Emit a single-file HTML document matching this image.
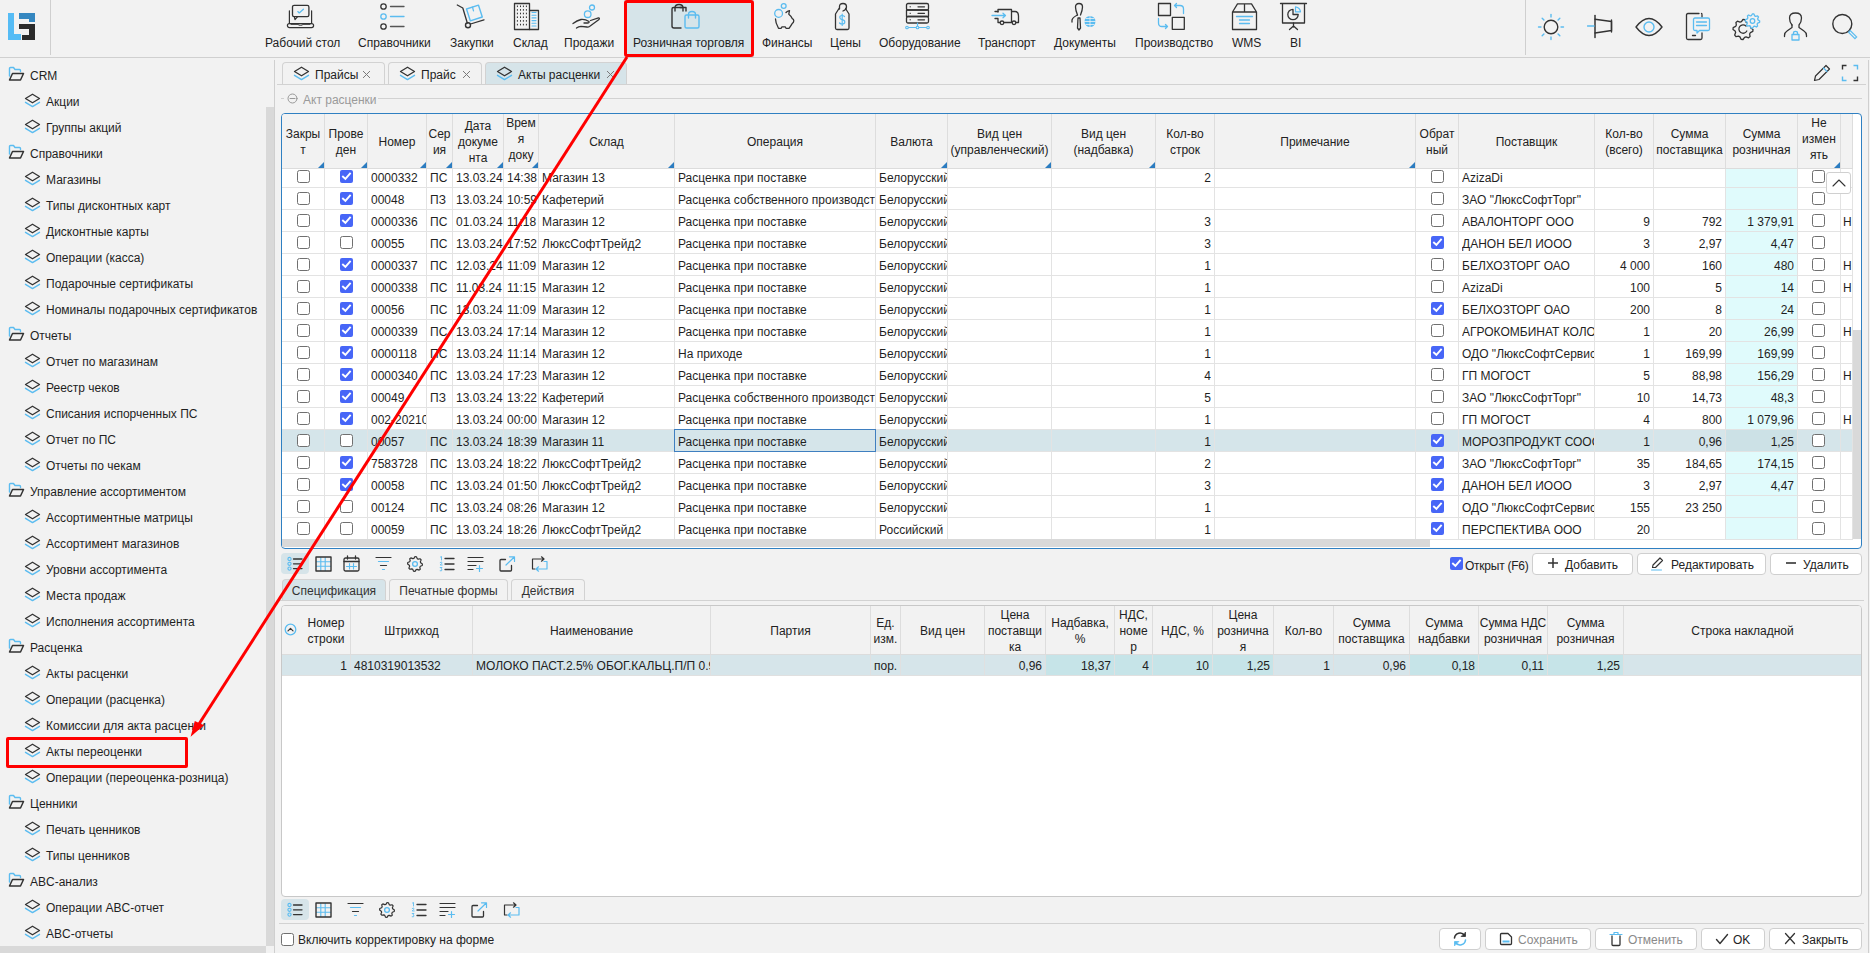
<!DOCTYPE html><html><head><meta charset="utf-8"><style>
*{box-sizing:border-box}
html,body{margin:0;padding:0}
body{width:1870px;height:953px;overflow:hidden;background:#f2f2f2;font-family:"Liberation Sans",sans-serif;font-size:12px;color:#1f1f1f}
#r{position:relative;width:1870px;height:953px;overflow:hidden;background:#f2f2f2}
.a{position:absolute}
.t{position:absolute;white-space:nowrap;line-height:14px}
.clip{position:absolute;overflow:hidden;white-space:nowrap;line-height:14px}
</style></head><body><div id="r">
<div class="a" style="left:8px;top:13px;width:6px;height:27px;background:#56bcf5"></div>
<div class="a" style="left:8px;top:34px;width:13px;height:6px;background:#56bcf5"></div>
<div class="a" style="left:19px;top:13px;width:16px;height:6px;background:#3587c0"></div>
<div class="a" style="left:29px;top:13px;width:6px;height:9px;background:#3587c0"></div>
<div class="a" style="left:19px;top:24px;width:16px;height:5px;background:#2b2b2b"></div>
<div class="a" style="left:29px;top:24px;width:6px;height:16px;background:#2b2b2b"></div>
<div class="a" style="left:22px;top:35px;width:13px;height:5px;background:#2b2b2b"></div>
<div class="a" style="left:50px;top:0px;width:1px;height:55px;background:#cfcfcf"></div>
<div class="a" style="left:0px;top:57px;width:1870px;height:1px;background:#d0d0d0"></div>
<div class="a" style="left:624px;top:-3px;width:130px;height:60px;background:#d6e4e9"></div>
<div class="t" style="left:265px;top:36px;color:#222">Рабочий стол</div>
<div class="t" style="left:358px;top:36px;color:#222">Справочники</div>
<div class="t" style="left:450px;top:36px;color:#222">Закупки</div>
<div class="t" style="left:513px;top:36px;color:#222">Склад</div>
<div class="t" style="left:564px;top:36px;color:#222">Продажи</div>
<div class="t" style="left:633px;top:36px;color:#222">Розничная торговля</div>
<div class="t" style="left:762px;top:36px;color:#222">Финансы</div>
<div class="t" style="left:830px;top:36px;color:#222">Цены</div>
<div class="t" style="left:879px;top:36px;color:#222">Оборудование</div>
<div class="t" style="left:978px;top:36px;color:#222">Транспорт</div>
<div class="t" style="left:1054px;top:36px;color:#222">Документы</div>
<div class="t" style="left:1135px;top:36px;color:#222">Производство</div>
<div class="t" style="left:1232px;top:36px;color:#222">WMS</div>
<div class="t" style="left:1290px;top:36px;color:#222">BI</div>
<svg class="a" style="left:286px;top:4px;" width="30" height="26" viewBox="0 0 30 26" fill="none" stroke-linecap="round" stroke-linejoin="round">
      <rect x="6.5" y="1.3" width="16.4" height="11.4" rx="1.6" stroke="#333" stroke-width="1.3"/>
      <path d="M8.3 12.7 L9 15.6 L11.6 12.7" stroke="#333" stroke-width="1.2"/>
      <path d="M11.8 7.6 L13.2 8.9 L17.4 5.2" stroke="#5bbcf0" stroke-width="1.3"/>
      <path d="M3.4 6.8 V19.5 M25.6 6.8 V19.5" stroke="#333" stroke-width="1.2"/>
      <rect x="1.4" y="19.6" width="26.2" height="4" rx="2" stroke="#333" stroke-width="1.2"/>
      <path d="M5 20.3 H12 Q12.5 21.3 14.5 21.3 Q16.5 21.3 17 20.3 H24" stroke="#333" stroke-width="1"/>
    </svg>
<svg class="a" style="left:379px;top:2px;" width="28" height="29" viewBox="0 0 28 29" fill="none" stroke-linecap="round" stroke-linejoin="round">
      <circle cx="4.5" cy="4.5" r="2.7" stroke="#333" stroke-width="1.3"/>
      <circle cx="4.5" cy="14.5" r="2.7" stroke="#5bbcf0" stroke-width="1.3"/>
      <circle cx="4.5" cy="24.5" r="2.7" stroke="#333" stroke-width="1.3"/>
      <path d="M11.5 4.5 H25" stroke="#555" stroke-width="1.3"/>
      <path d="M11.5 14.5 H25" stroke="#5bbcf0" stroke-width="1.3"/>
      <path d="M11.5 24.5 H25" stroke="#555" stroke-width="1.3"/>
    </svg>
<svg class="a" style="left:455px;top:3px;" width="30" height="27" viewBox="0 0 30 27" fill="none" stroke-linecap="round" stroke-linejoin="round">
      <path d="M2.3 2 L7.8 5 L12.3 20" stroke="#333" stroke-width="1.3"/>
      <circle cx="13" cy="22.2" r="2.5" stroke="#333" stroke-width="1.4"/>
      <path d="M15.5 21 L29 16.8" stroke="#333" stroke-width="1.3"/>
      <path d="M11.5 6 L23.5 2.2 L27.3 14 L15.3 17.8 Z" stroke="#5bbcf0" stroke-width="1.4"/>
      <path d="M17.5 4.2 L18.5 7.8" stroke="#5bbcf0" stroke-width="1.3"/>
    </svg>
<svg class="a" style="left:513px;top:2px;" width="28" height="29" viewBox="0 0 28 29" fill="none" stroke-linecap="round" stroke-linejoin="round">
      <rect x="1.5" y="1.5" width="15" height="26" stroke="#333" stroke-width="1.3"/>
      <path d="M16.5 8.5 H25.5 V27.5 H16.5" stroke="#333" stroke-width="1.3"/>
      <path d="M19 10.5 H23" stroke="#5bbcf0" stroke-width="1.1"/><path d="M19 13.2 H23" stroke="#5bbcf0" stroke-width="1.1"/><path d="M19 15.9 H23" stroke="#5bbcf0" stroke-width="1.1"/><path d="M19 18.6 H23" stroke="#5bbcf0" stroke-width="1.1"/><path d="M19 21.3 H23" stroke="#5bbcf0" stroke-width="1.1"/><path d="M19 24.0 H23" stroke="#5bbcf0" stroke-width="1.1"/><path d="M4.4 3.5 V5.1" stroke="#333" stroke-width="1" stroke-linecap="butt"/><path d="M4.4 7.1 V8.7" stroke="#333" stroke-width="1" stroke-linecap="butt"/><path d="M4.4 10.7 V12.3" stroke="#333" stroke-width="1" stroke-linecap="butt"/><path d="M4.4 14.4 V16.0" stroke="#333" stroke-width="1" stroke-linecap="butt"/><path d="M4.4 18.1 V19.7" stroke="#333" stroke-width="1" stroke-linecap="butt"/><path d="M4.4 21.8 V23.4" stroke="#333" stroke-width="1" stroke-linecap="butt"/><path d="M7.5 3.5 V5.1" stroke="#333" stroke-width="1" stroke-linecap="butt"/><path d="M7.5 7.1 V8.7" stroke="#333" stroke-width="1" stroke-linecap="butt"/><path d="M7.5 10.7 V12.3" stroke="#333" stroke-width="1" stroke-linecap="butt"/><path d="M7.5 14.4 V16.0" stroke="#333" stroke-width="1" stroke-linecap="butt"/><path d="M7.5 18.1 V19.7" stroke="#333" stroke-width="1" stroke-linecap="butt"/><path d="M7.5 21.8 V23.4" stroke="#333" stroke-width="1" stroke-linecap="butt"/><path d="M10.4 3.5 V5.1" stroke="#333" stroke-width="1" stroke-linecap="butt"/><path d="M10.4 7.1 V8.7" stroke="#333" stroke-width="1" stroke-linecap="butt"/><path d="M10.4 10.7 V12.3" stroke="#333" stroke-width="1" stroke-linecap="butt"/><path d="M10.4 14.4 V16.0" stroke="#333" stroke-width="1" stroke-linecap="butt"/><path d="M10.4 18.1 V19.7" stroke="#333" stroke-width="1" stroke-linecap="butt"/><path d="M10.4 21.8 V23.4" stroke="#333" stroke-width="1" stroke-linecap="butt"/><path d="M13.4 3.5 V5.1" stroke="#333" stroke-width="1" stroke-linecap="butt"/><path d="M13.4 7.1 V8.7" stroke="#333" stroke-width="1" stroke-linecap="butt"/><path d="M13.4 10.7 V12.3" stroke="#333" stroke-width="1" stroke-linecap="butt"/><path d="M13.4 14.4 V16.0" stroke="#333" stroke-width="1" stroke-linecap="butt"/><path d="M13.4 18.1 V19.7" stroke="#333" stroke-width="1" stroke-linecap="butt"/><path d="M13.4 21.8 V23.4" stroke="#333" stroke-width="1" stroke-linecap="butt"/>
    </svg>
<svg class="a" style="left:572px;top:3px;" width="30" height="27" viewBox="0 0 30 27" fill="none" stroke-linecap="round" stroke-linejoin="round">
      <circle cx="15.7" cy="11.2" r="3.3" stroke="#5bbcf0" stroke-width="1.3"/>
      <circle cx="20" cy="4.5" r="2.5" stroke="#5bbcf0" stroke-width="1.3"/>
      <path d="M1 20.5 Q5 17.5 9 16.5 Q13 16 17 18.5 Q17.5 20 15.5 20 H12" stroke="#333" stroke-width="1.3"/>
      <path d="M18.5 17.5 L26.5 14.8 Q28 15 27 16.5 L17.5 23.5 Q16.5 24.2 15 24 L9 23.3 Q6.5 23.5 4.5 25" stroke="#333" stroke-width="1.3"/>
    </svg>
<svg class="a" style="left:670px;top:3px;" width="32" height="28" viewBox="0 0 32 28" fill="none" stroke-linecap="round" stroke-linejoin="round">
      <path d="M12.5 4.5 H3.5 Q2 4.5 2 6 V23 Q2 25 4 25 H11" stroke="#333" stroke-width="1.4"/>
      <path d="M5 8 V5 Q5 1.5 9 1.5 Q13 1.5 13 5 V8" stroke="#333" stroke-width="1.4"/>
      <path d="M10 4.5 H16 V8" stroke="#333" stroke-width="1.4"/>
      <rect x="15" y="12" width="14" height="13" rx="1.5" stroke="#5bbcf0" stroke-width="1.4"/>
      <path d="M18.5 15 V11.5 Q18.5 8.5 22 8.5 Q25.5 8.5 25.5 11.5 V15" stroke="#5bbcf0" stroke-width="1.4"/>
    </svg>
<svg class="a" style="left:772px;top:2px;" width="26" height="29" viewBox="0 0 26 29" fill="none" stroke-linecap="round" stroke-linejoin="round">
      <circle cx="6.6" cy="11.4" r="3.9" stroke="#5bbcf0" stroke-width="1.3"/>
      <circle cx="11.7" cy="4" r="2.4" stroke="#5bbcf0" stroke-width="1.3"/>
      <path d="M3.5 17 Q3.5 21 6.5 26.3 H9.2 L10 24.8 H13.2 L14 26.3 H17 Q19 23.5 20 21.8 Q21.8 20.5 21.8 18.8 Q21.8 17.2 20.2 16.6 Q19 13.8 16.8 12.2 L17.5 8.6 Q15.5 9 14 10.5" stroke="#333" stroke-width="1.3"/>
    </svg>
<svg class="a" style="left:833px;top:2px;" width="20" height="29" viewBox="0 0 20 29" fill="none" stroke-linecap="round" stroke-linejoin="round">
      <path d="M6.5 7 V4.5 Q6.5 1.5 10 1.5 Q13.5 1.5 13.5 5 Q13.5 7.5 10 9" stroke="#333" stroke-width="1.3"/>
      <path d="M6 6.5 L2.5 12 V26 Q2.5 27.5 4 27.5 H14.5 Q16 27.5 16 26 V12 L12.5 6.5" stroke="#333" stroke-width="1.3"/>
      <path d="M11.5 14.5 Q10.5 13.5 9 13.5 Q6.8 13.5 6.8 15.5 Q6.8 17.2 9.2 17.7 Q11.8 18.2 11.8 20 Q11.8 22 9.2 22 Q7.5 22 6.5 21" stroke="#5bbcf0" stroke-width="1.2"/>
      <path d="M9.2 12 V23.5" stroke="#5bbcf0" stroke-width="1.2"/>
    </svg>
<svg class="a" style="left:904px;top:2px;" width="28" height="29" viewBox="0 0 28 29" fill="none" stroke-linecap="round" stroke-linejoin="round">
      <rect x="2.5" y="1.5" width="22" height="6.5" rx="1.5" stroke="#333" stroke-width="1.3"/>
      <rect x="2.5" y="8" width="22" height="6.5" rx="0" stroke="#333" stroke-width="1.3"/>
      <rect x="2.5" y="14.5" width="22" height="6.5" rx="1.5" stroke="#333" stroke-width="1.3"/>
      <path d="M14 4.8 H20.5 M14 11.3 H20.5 M14 17.8 H20.5" stroke="#333" stroke-width="1.3"/>
      <path d="M6 4.8 H6.5 M6 11.3 H6.5 M6 17.8 H6.5" stroke="#333" stroke-width="1"/>
      <path d="M3.5 25.5 H23.5 M13.5 21 V25.5" stroke="#5bbcf0" stroke-width="1.2"/>
      <circle cx="3" cy="25.5" r="1.3" stroke="#5bbcf0" stroke-width="1.1" fill="#f2f2f2"/>
      <circle cx="13.5" cy="25.5" r="1.3" stroke="#5bbcf0" stroke-width="1.1" fill="#f2f2f2"/>
      <circle cx="24" cy="25.5" r="1.3" stroke="#5bbcf0" stroke-width="1.1" fill="#f2f2f2"/>
    </svg>
<svg class="a" style="left:990px;top:6px;" width="32" height="20" viewBox="0 0 32 20" fill="none" stroke-linecap="round" stroke-linejoin="round">
      <path d="M8 6 V3.5 H21.5 V16.5 H14" stroke="#333" stroke-width="1.3"/>
      <path d="M5 5.5 H8 M5 12.5 H8 V16.5 H9.8" stroke="#333" stroke-width="1.3"/>
      <path d="M21.5 5.5 H25 Q28.5 5.5 28.5 10 V16.5 H26" stroke="#333" stroke-width="1.3"/>
      <circle cx="12" cy="16.8" r="1.8" stroke="#333" stroke-width="1.3"/>
      <circle cx="24" cy="16.8" r="1.8" stroke="#333" stroke-width="1.3"/>
      <path d="M2 9.5 H15.5 M13 7.2 L15.5 9.5 L13 11.8" stroke="#5bbcf0" stroke-width="1.3"/>
    </svg>
<svg class="a" style="left:1069px;top:2px;" width="28" height="29" viewBox="0 0 28 29" fill="none" stroke-linecap="round" stroke-linejoin="round">
      <path d="M8.5 13 Q6.5 8 6.5 5 Q6.5 1.5 10 1.5 Q13.5 1.5 13.5 5 Q13.5 8 11.5 13" stroke="#333" stroke-width="1.3"/>
      <path d="M8.5 13 Q4 15 3 18 V20" stroke="#333" stroke-width="1.3"/>
      <path d="M9 16 L8.5 26 L10 28 L11.5 26 L11 16 Z" stroke="#333" stroke-width="1.3"/>
      <circle cx="21" cy="19.5" r="5.5" fill="#5bbcf0"/>
      <path d="M15.5 19.5 H26.5 M21 14 V25 M17 16.5 H25 M17 22.5 H25" stroke="#f2f2f2" stroke-width="0.8"/>
    </svg>
<svg class="a" style="left:1157px;top:2px;" width="30" height="29" viewBox="0 0 30 29" fill="none" stroke-linecap="round" stroke-linejoin="round">
      <rect x="1.5" y="1.5" width="12" height="12" stroke="#333" stroke-width="1.3"/>
      <rect x="15.3" y="15.3" width="12" height="12" stroke="#333" stroke-width="1.3"/>
      <path d="M26.5 11.5 V7 Q26.5 3.5 23 3.5 H17.5 M19.5 1.5 L17.5 3.5 L19.5 5.5" stroke="#5bbcf0" stroke-width="1.3"/>
      <path d="M1.5 16.5 V21 Q1.5 24.5 5 24.5 H10.5 M8.5 22.5 L10.5 24.5 L8.5 26.5" stroke="#5bbcf0" stroke-width="1.3"/>
    </svg>
<svg class="a" style="left:1230px;top:2px;" width="30" height="29" viewBox="0 0 30 29" fill="none" stroke-linecap="round" stroke-linejoin="round">
      <path d="M2.5 10 L7.5 1.8 H21.5 L26.5 10 V27.5 H2.5 Z M2.5 10 H26.5 M14.5 1.8 V10" stroke="#333" stroke-width="1.3"/>
      <path d="M6.5 14.5 H22.5 M9.5 18 H19.5 M9.5 21.5 H19.5" stroke="#5bbcf0" stroke-width="1.3"/>
    </svg>
<svg class="a" style="left:1279px;top:2px;" width="30" height="29" viewBox="0 0 30 29" fill="none" stroke-linecap="round" stroke-linejoin="round">
      <path d="M1.5 1.5 H27.5 M3.5 1.5 V21 H25.5 V1.5" stroke="#333" stroke-width="1.3"/>
      <path d="M14.5 21 V25 M14.5 24 L10.5 27.5 M14.5 24 L18.5 27.5" stroke="#333" stroke-width="1.3"/>
      <path d="M14 7.3 A5.2 5.2 0 1 0 19.2 12.5 H14 Z" stroke="#333" stroke-width="1.3"/>
      <path d="M16.5 4.8 V9.8 H21.5 Q21 5.5 16.5 4.8 Z" stroke="#5bbcf0" stroke-width="1.2"/>
    </svg>
<div class="a" style="left:1525px;top:0px;width:1px;height:55px;background:#cfcfcf"></div>
<svg class="a" style="left:1537px;top:13px;" width="28" height="28" viewBox="0 0 28 28" fill="none" stroke-linecap="round" stroke-linejoin="round"><circle cx="14" cy="14" r="6.8" stroke="#333" stroke-width="1.4"/><path d="M24.00 14.00 L26.50 14.00" stroke="#5bbcf0" stroke-width="1.4"/><path d="M21.07 21.07 L22.84 22.84" stroke="#5bbcf0" stroke-width="1.4"/><path d="M14.00 24.00 L14.00 26.50" stroke="#5bbcf0" stroke-width="1.4"/><path d="M6.93 21.07 L5.16 22.84" stroke="#5bbcf0" stroke-width="1.4"/><path d="M4.00 14.00 L1.50 14.00" stroke="#5bbcf0" stroke-width="1.4"/><path d="M6.93 6.93 L5.16 5.16" stroke="#5bbcf0" stroke-width="1.4"/><path d="M14.00 4.00 L14.00 1.50" stroke="#5bbcf0" stroke-width="1.4"/><path d="M21.07 6.93 L22.84 5.16" stroke="#5bbcf0" stroke-width="1.4"/></svg>
<svg class="a" style="left:1587px;top:14px;" width="28" height="25" viewBox="0 0 28 25" fill="none" stroke-linecap="round" stroke-linejoin="round">
      <path d="M8 1.5 V23.5" stroke="#333" stroke-width="1.5"/>
      <path d="M8 5.2 L24.5 7.5 V16.5 L8 19" stroke="#333" stroke-width="1.4"/>
      <path d="M24.5 6 V18" stroke="#333" stroke-width="1.4"/>
      <path d="M0.5 12 H7" stroke="#5bbcf0" stroke-width="1.5"/>
    </svg>
<svg class="a" style="left:1634px;top:16px;" width="30" height="22" viewBox="0 0 30 22" fill="none" stroke-linecap="round" stroke-linejoin="round">
      <path d="M2 11 Q15 -6 28 11 Q15 28 2 11 Z" stroke="#333" stroke-width="1.4"/>
      <circle cx="15" cy="11" r="5" stroke="#5bbcf0" stroke-width="1.4"/>
    </svg>
<svg class="a" style="left:1684px;top:11px;" width="28" height="31" viewBox="0 0 28 31" fill="none" stroke-linecap="round" stroke-linejoin="round">
      <path d="M15 2.5 H4 Q2.5 2.5 2.5 4 V27 Q2.5 28.5 4 28.5 H16.5 Q18 28.5 18 27 V22" stroke="#333" stroke-width="1.3"/>
      <path d="M17.5 2.5 Q18 2.5 18 4 V6" stroke="#333" stroke-width="1.3"/>
      <path d="M8.5 24.5 H11.5" stroke="#333" stroke-width="1.3"/>
      <path d="M11 7 H24 Q25.5 7 25.5 8.5 V18 Q25.5 19.5 24 19.5 H15.5 L13 22 V19.5 H11 Q9.5 19.5 9.5 18 V8.5 Q9.5 7 11 7 Z" stroke="#5bbcf0" stroke-width="1.3"/>
      <path d="M12.5 11 H22.5 M12.5 14.5 H22.5" stroke="#5bbcf0" stroke-width="1.3"/>
    </svg>
<svg class="a" style="left:1730px;top:11px;" width="32" height="32" viewBox="0 0 32 32" fill="none" stroke-linecap="round" stroke-linejoin="round">
      <path d="M23.00 18.50 L22.81 20.45 L20.39 21.56 L19.65 22.94 L20.07 25.57 L18.56 26.81 L16.06 25.89 L14.56 26.35 L13.00 28.50 L11.05 28.31 L9.94 25.89 L8.56 25.15 L5.93 25.57 L4.69 24.06 L5.61 21.56 L5.15 20.06 L3.00 18.50 L3.19 16.55 L5.61 15.44 L6.35 14.06 L5.93 11.43 L7.44 10.19 L9.94 11.11 L11.44 10.65 L13.00 8.50 L14.95 8.69 L16.06 11.11 L17.44 11.85 L20.07 11.43 L21.31 12.94 L20.39 15.44 L20.85 16.94 Z" stroke="#333" stroke-width="1.3"/>
      <path d="M16 15 A4.2 4.2 0 1 0 16.8 20" stroke="#333" stroke-width="1.3"/>
      <path d="M29.70 10.00 L29.56 11.40 L27.67 12.14 L27.16 13.11 L27.59 15.09 L26.50 15.99 L24.64 15.17 L23.59 15.49 L22.50 17.20 L21.10 17.06 L20.36 15.17 L19.39 14.66 L17.41 15.09 L16.51 14.00 L17.33 12.14 L17.01 11.09 L15.30 10.00 L15.44 8.60 L17.33 7.86 L17.84 6.89 L17.41 4.91 L18.50 4.01 L20.36 4.83 L21.41 4.51 L22.50 2.80 L23.90 2.94 L24.64 4.83 L25.61 5.34 L27.59 4.91 L28.49 6.00 L27.67 7.86 L27.99 8.91 Z" stroke="#5bbcf0" stroke-width="1.3" fill="#f2f2f2"/>
      <circle cx="22.5" cy="10" r="2.3" stroke="#5bbcf0" stroke-width="1.3"/>
    </svg>
<svg class="a" style="left:1782px;top:11px;" width="28" height="31" viewBox="0 0 28 31" fill="none" stroke-linecap="round" stroke-linejoin="round">
      <path d="M10 14 Q7.5 11 7.5 7 Q7.5 2 13.5 2 Q19.5 2 19.5 7 Q19.5 11 17 14 V16.5 L22 20 Q24.5 21.5 24.5 24.5 V25.5" stroke="#333" stroke-width="1.3"/>
      <path d="M10 14 V16.5 L5 20 Q2.5 21.5 2.5 24.5 V25.5" stroke="#333" stroke-width="1.3"/>
      <rect x="10" y="23.5" width="7" height="5.5" stroke="#5bbcf0" stroke-width="1.3"/>
      <path d="M11.5 23.5 V22 Q11.5 20.3 13.5 20.3 Q15.5 20.3 15.5 22 V23.5" stroke="#5bbcf0" stroke-width="1.3"/>
    </svg>
<svg class="a" style="left:1830px;top:12px;" width="30" height="30" viewBox="0 0 30 30" fill="none" stroke-linecap="round" stroke-linejoin="round">
      <circle cx="12.3" cy="12" r="9.5" stroke="#333" stroke-width="1.4"/>
      <path d="M19 19 L26.2 26.2" stroke="#5bbcf0" stroke-width="3.6" stroke-linecap="butt"/>
      <path d="M19.8 19.8 L25.4 25.4" stroke="#f2f2f2" stroke-width="1.2" stroke-linecap="butt"/>
    </svg>
<svg class="a" style="left:8px;top:66px;" width="18" height="16" viewBox="0 0 18 16" fill="none" stroke-linecap="round" stroke-linejoin="round">
      <path d="M1.5 10 V2.5 Q1.5 1.5 2.5 1.5 H5.5 L7 3.5 H11.5 Q12.5 3.5 12.5 4.5 V5.5" stroke="#5bbcf0" stroke-width="1.4"/>
      <path d="M4.5 7.5 H15.5 L12.5 14 H1.5 Z" stroke="#333" stroke-width="1.5"/>
    </svg>
<div class="t" style="left:30px;top:69px;">CRM</div>
<svg class="a" style="left:23.5px;top:93px;" width="17" height="15" viewBox="0 0 17 15" fill="none" stroke-linecap="round" stroke-linejoin="round">
      <path d="M8.5 1.2 L15.5 5.5 L8.5 9.8 L1.5 5.5 Z" stroke="#333" stroke-width="1.3"/>
      <path d="M1.5 9.3 L8.5 13.6 L15.5 9.3" stroke="#5bbcf0" stroke-width="1.4"/>
    </svg>
<div class="t" style="left:46px;top:95px;">Акции</div>
<svg class="a" style="left:23.5px;top:119px;" width="17" height="15" viewBox="0 0 17 15" fill="none" stroke-linecap="round" stroke-linejoin="round">
      <path d="M8.5 1.2 L15.5 5.5 L8.5 9.8 L1.5 5.5 Z" stroke="#333" stroke-width="1.3"/>
      <path d="M1.5 9.3 L8.5 13.6 L15.5 9.3" stroke="#5bbcf0" stroke-width="1.4"/>
    </svg>
<div class="t" style="left:46px;top:121px;">Группы акций</div>
<svg class="a" style="left:8px;top:144px;" width="18" height="16" viewBox="0 0 18 16" fill="none" stroke-linecap="round" stroke-linejoin="round">
      <path d="M1.5 10 V2.5 Q1.5 1.5 2.5 1.5 H5.5 L7 3.5 H11.5 Q12.5 3.5 12.5 4.5 V5.5" stroke="#5bbcf0" stroke-width="1.4"/>
      <path d="M4.5 7.5 H15.5 L12.5 14 H1.5 Z" stroke="#333" stroke-width="1.5"/>
    </svg>
<div class="t" style="left:30px;top:147px;">Справочники</div>
<svg class="a" style="left:23.5px;top:171px;" width="17" height="15" viewBox="0 0 17 15" fill="none" stroke-linecap="round" stroke-linejoin="round">
      <path d="M8.5 1.2 L15.5 5.5 L8.5 9.8 L1.5 5.5 Z" stroke="#333" stroke-width="1.3"/>
      <path d="M1.5 9.3 L8.5 13.6 L15.5 9.3" stroke="#5bbcf0" stroke-width="1.4"/>
    </svg>
<div class="t" style="left:46px;top:173px;">Магазины</div>
<svg class="a" style="left:23.5px;top:197px;" width="17" height="15" viewBox="0 0 17 15" fill="none" stroke-linecap="round" stroke-linejoin="round">
      <path d="M8.5 1.2 L15.5 5.5 L8.5 9.8 L1.5 5.5 Z" stroke="#333" stroke-width="1.3"/>
      <path d="M1.5 9.3 L8.5 13.6 L15.5 9.3" stroke="#5bbcf0" stroke-width="1.4"/>
    </svg>
<div class="t" style="left:46px;top:199px;">Типы дисконтных карт</div>
<svg class="a" style="left:23.5px;top:223px;" width="17" height="15" viewBox="0 0 17 15" fill="none" stroke-linecap="round" stroke-linejoin="round">
      <path d="M8.5 1.2 L15.5 5.5 L8.5 9.8 L1.5 5.5 Z" stroke="#333" stroke-width="1.3"/>
      <path d="M1.5 9.3 L8.5 13.6 L15.5 9.3" stroke="#5bbcf0" stroke-width="1.4"/>
    </svg>
<div class="t" style="left:46px;top:225px;">Дисконтные карты</div>
<svg class="a" style="left:23.5px;top:249px;" width="17" height="15" viewBox="0 0 17 15" fill="none" stroke-linecap="round" stroke-linejoin="round">
      <path d="M8.5 1.2 L15.5 5.5 L8.5 9.8 L1.5 5.5 Z" stroke="#333" stroke-width="1.3"/>
      <path d="M1.5 9.3 L8.5 13.6 L15.5 9.3" stroke="#5bbcf0" stroke-width="1.4"/>
    </svg>
<div class="t" style="left:46px;top:251px;">Операции (касса)</div>
<svg class="a" style="left:23.5px;top:275px;" width="17" height="15" viewBox="0 0 17 15" fill="none" stroke-linecap="round" stroke-linejoin="round">
      <path d="M8.5 1.2 L15.5 5.5 L8.5 9.8 L1.5 5.5 Z" stroke="#333" stroke-width="1.3"/>
      <path d="M1.5 9.3 L8.5 13.6 L15.5 9.3" stroke="#5bbcf0" stroke-width="1.4"/>
    </svg>
<div class="t" style="left:46px;top:277px;">Подарочные сертификаты</div>
<svg class="a" style="left:23.5px;top:301px;" width="17" height="15" viewBox="0 0 17 15" fill="none" stroke-linecap="round" stroke-linejoin="round">
      <path d="M8.5 1.2 L15.5 5.5 L8.5 9.8 L1.5 5.5 Z" stroke="#333" stroke-width="1.3"/>
      <path d="M1.5 9.3 L8.5 13.6 L15.5 9.3" stroke="#5bbcf0" stroke-width="1.4"/>
    </svg>
<div class="t" style="left:46px;top:303px;">Номиналы подарочных сертификатов</div>
<svg class="a" style="left:8px;top:326px;" width="18" height="16" viewBox="0 0 18 16" fill="none" stroke-linecap="round" stroke-linejoin="round">
      <path d="M1.5 10 V2.5 Q1.5 1.5 2.5 1.5 H5.5 L7 3.5 H11.5 Q12.5 3.5 12.5 4.5 V5.5" stroke="#5bbcf0" stroke-width="1.4"/>
      <path d="M4.5 7.5 H15.5 L12.5 14 H1.5 Z" stroke="#333" stroke-width="1.5"/>
    </svg>
<div class="t" style="left:30px;top:329px;">Отчеты</div>
<svg class="a" style="left:23.5px;top:353px;" width="17" height="15" viewBox="0 0 17 15" fill="none" stroke-linecap="round" stroke-linejoin="round">
      <path d="M8.5 1.2 L15.5 5.5 L8.5 9.8 L1.5 5.5 Z" stroke="#333" stroke-width="1.3"/>
      <path d="M1.5 9.3 L8.5 13.6 L15.5 9.3" stroke="#5bbcf0" stroke-width="1.4"/>
    </svg>
<div class="t" style="left:46px;top:355px;">Отчет по магазинам</div>
<svg class="a" style="left:23.5px;top:379px;" width="17" height="15" viewBox="0 0 17 15" fill="none" stroke-linecap="round" stroke-linejoin="round">
      <path d="M8.5 1.2 L15.5 5.5 L8.5 9.8 L1.5 5.5 Z" stroke="#333" stroke-width="1.3"/>
      <path d="M1.5 9.3 L8.5 13.6 L15.5 9.3" stroke="#5bbcf0" stroke-width="1.4"/>
    </svg>
<div class="t" style="left:46px;top:381px;">Реестр чеков</div>
<svg class="a" style="left:23.5px;top:405px;" width="17" height="15" viewBox="0 0 17 15" fill="none" stroke-linecap="round" stroke-linejoin="round">
      <path d="M8.5 1.2 L15.5 5.5 L8.5 9.8 L1.5 5.5 Z" stroke="#333" stroke-width="1.3"/>
      <path d="M1.5 9.3 L8.5 13.6 L15.5 9.3" stroke="#5bbcf0" stroke-width="1.4"/>
    </svg>
<div class="t" style="left:46px;top:407px;">Списания испорченных ПС</div>
<svg class="a" style="left:23.5px;top:431px;" width="17" height="15" viewBox="0 0 17 15" fill="none" stroke-linecap="round" stroke-linejoin="round">
      <path d="M8.5 1.2 L15.5 5.5 L8.5 9.8 L1.5 5.5 Z" stroke="#333" stroke-width="1.3"/>
      <path d="M1.5 9.3 L8.5 13.6 L15.5 9.3" stroke="#5bbcf0" stroke-width="1.4"/>
    </svg>
<div class="t" style="left:46px;top:433px;">Отчет по ПС</div>
<svg class="a" style="left:23.5px;top:457px;" width="17" height="15" viewBox="0 0 17 15" fill="none" stroke-linecap="round" stroke-linejoin="round">
      <path d="M8.5 1.2 L15.5 5.5 L8.5 9.8 L1.5 5.5 Z" stroke="#333" stroke-width="1.3"/>
      <path d="M1.5 9.3 L8.5 13.6 L15.5 9.3" stroke="#5bbcf0" stroke-width="1.4"/>
    </svg>
<div class="t" style="left:46px;top:459px;">Отчеты по чекам</div>
<svg class="a" style="left:8px;top:482px;" width="18" height="16" viewBox="0 0 18 16" fill="none" stroke-linecap="round" stroke-linejoin="round">
      <path d="M1.5 10 V2.5 Q1.5 1.5 2.5 1.5 H5.5 L7 3.5 H11.5 Q12.5 3.5 12.5 4.5 V5.5" stroke="#5bbcf0" stroke-width="1.4"/>
      <path d="M4.5 7.5 H15.5 L12.5 14 H1.5 Z" stroke="#333" stroke-width="1.5"/>
    </svg>
<div class="t" style="left:30px;top:485px;">Управление ассортиментом</div>
<svg class="a" style="left:23.5px;top:509px;" width="17" height="15" viewBox="0 0 17 15" fill="none" stroke-linecap="round" stroke-linejoin="round">
      <path d="M8.5 1.2 L15.5 5.5 L8.5 9.8 L1.5 5.5 Z" stroke="#333" stroke-width="1.3"/>
      <path d="M1.5 9.3 L8.5 13.6 L15.5 9.3" stroke="#5bbcf0" stroke-width="1.4"/>
    </svg>
<div class="t" style="left:46px;top:511px;">Ассортиментные матрицы</div>
<svg class="a" style="left:23.5px;top:535px;" width="17" height="15" viewBox="0 0 17 15" fill="none" stroke-linecap="round" stroke-linejoin="round">
      <path d="M8.5 1.2 L15.5 5.5 L8.5 9.8 L1.5 5.5 Z" stroke="#333" stroke-width="1.3"/>
      <path d="M1.5 9.3 L8.5 13.6 L15.5 9.3" stroke="#5bbcf0" stroke-width="1.4"/>
    </svg>
<div class="t" style="left:46px;top:537px;">Ассортимент магазинов</div>
<svg class="a" style="left:23.5px;top:561px;" width="17" height="15" viewBox="0 0 17 15" fill="none" stroke-linecap="round" stroke-linejoin="round">
      <path d="M8.5 1.2 L15.5 5.5 L8.5 9.8 L1.5 5.5 Z" stroke="#333" stroke-width="1.3"/>
      <path d="M1.5 9.3 L8.5 13.6 L15.5 9.3" stroke="#5bbcf0" stroke-width="1.4"/>
    </svg>
<div class="t" style="left:46px;top:563px;">Уровни ассортимента</div>
<svg class="a" style="left:23.5px;top:587px;" width="17" height="15" viewBox="0 0 17 15" fill="none" stroke-linecap="round" stroke-linejoin="round">
      <path d="M8.5 1.2 L15.5 5.5 L8.5 9.8 L1.5 5.5 Z" stroke="#333" stroke-width="1.3"/>
      <path d="M1.5 9.3 L8.5 13.6 L15.5 9.3" stroke="#5bbcf0" stroke-width="1.4"/>
    </svg>
<div class="t" style="left:46px;top:589px;">Места продаж</div>
<svg class="a" style="left:23.5px;top:613px;" width="17" height="15" viewBox="0 0 17 15" fill="none" stroke-linecap="round" stroke-linejoin="round">
      <path d="M8.5 1.2 L15.5 5.5 L8.5 9.8 L1.5 5.5 Z" stroke="#333" stroke-width="1.3"/>
      <path d="M1.5 9.3 L8.5 13.6 L15.5 9.3" stroke="#5bbcf0" stroke-width="1.4"/>
    </svg>
<div class="t" style="left:46px;top:615px;">Исполнения ассортимента</div>
<svg class="a" style="left:8px;top:638px;" width="18" height="16" viewBox="0 0 18 16" fill="none" stroke-linecap="round" stroke-linejoin="round">
      <path d="M1.5 10 V2.5 Q1.5 1.5 2.5 1.5 H5.5 L7 3.5 H11.5 Q12.5 3.5 12.5 4.5 V5.5" stroke="#5bbcf0" stroke-width="1.4"/>
      <path d="M4.5 7.5 H15.5 L12.5 14 H1.5 Z" stroke="#333" stroke-width="1.5"/>
    </svg>
<div class="t" style="left:30px;top:641px;">Расценка</div>
<svg class="a" style="left:23.5px;top:665px;" width="17" height="15" viewBox="0 0 17 15" fill="none" stroke-linecap="round" stroke-linejoin="round">
      <path d="M8.5 1.2 L15.5 5.5 L8.5 9.8 L1.5 5.5 Z" stroke="#333" stroke-width="1.3"/>
      <path d="M1.5 9.3 L8.5 13.6 L15.5 9.3" stroke="#5bbcf0" stroke-width="1.4"/>
    </svg>
<div class="t" style="left:46px;top:667px;">Акты расценки</div>
<svg class="a" style="left:23.5px;top:691px;" width="17" height="15" viewBox="0 0 17 15" fill="none" stroke-linecap="round" stroke-linejoin="round">
      <path d="M8.5 1.2 L15.5 5.5 L8.5 9.8 L1.5 5.5 Z" stroke="#333" stroke-width="1.3"/>
      <path d="M1.5 9.3 L8.5 13.6 L15.5 9.3" stroke="#5bbcf0" stroke-width="1.4"/>
    </svg>
<div class="t" style="left:46px;top:693px;">Операции (расценка)</div>
<svg class="a" style="left:23.5px;top:717px;" width="17" height="15" viewBox="0 0 17 15" fill="none" stroke-linecap="round" stroke-linejoin="round">
      <path d="M8.5 1.2 L15.5 5.5 L8.5 9.8 L1.5 5.5 Z" stroke="#333" stroke-width="1.3"/>
      <path d="M1.5 9.3 L8.5 13.6 L15.5 9.3" stroke="#5bbcf0" stroke-width="1.4"/>
    </svg>
<div class="t" style="left:46px;top:719px;">Комиссии для акта расценки</div>
<svg class="a" style="left:23.5px;top:743px;" width="17" height="15" viewBox="0 0 17 15" fill="none" stroke-linecap="round" stroke-linejoin="round">
      <path d="M8.5 1.2 L15.5 5.5 L8.5 9.8 L1.5 5.5 Z" stroke="#333" stroke-width="1.3"/>
      <path d="M1.5 9.3 L8.5 13.6 L15.5 9.3" stroke="#5bbcf0" stroke-width="1.4"/>
    </svg>
<div class="t" style="left:46px;top:745px;">Акты переоценки</div>
<svg class="a" style="left:23.5px;top:769px;" width="17" height="15" viewBox="0 0 17 15" fill="none" stroke-linecap="round" stroke-linejoin="round">
      <path d="M8.5 1.2 L15.5 5.5 L8.5 9.8 L1.5 5.5 Z" stroke="#333" stroke-width="1.3"/>
      <path d="M1.5 9.3 L8.5 13.6 L15.5 9.3" stroke="#5bbcf0" stroke-width="1.4"/>
    </svg>
<div class="t" style="left:46px;top:771px;">Операции (переоценка-розница)</div>
<svg class="a" style="left:8px;top:794px;" width="18" height="16" viewBox="0 0 18 16" fill="none" stroke-linecap="round" stroke-linejoin="round">
      <path d="M1.5 10 V2.5 Q1.5 1.5 2.5 1.5 H5.5 L7 3.5 H11.5 Q12.5 3.5 12.5 4.5 V5.5" stroke="#5bbcf0" stroke-width="1.4"/>
      <path d="M4.5 7.5 H15.5 L12.5 14 H1.5 Z" stroke="#333" stroke-width="1.5"/>
    </svg>
<div class="t" style="left:30px;top:797px;">Ценники</div>
<svg class="a" style="left:23.5px;top:821px;" width="17" height="15" viewBox="0 0 17 15" fill="none" stroke-linecap="round" stroke-linejoin="round">
      <path d="M8.5 1.2 L15.5 5.5 L8.5 9.8 L1.5 5.5 Z" stroke="#333" stroke-width="1.3"/>
      <path d="M1.5 9.3 L8.5 13.6 L15.5 9.3" stroke="#5bbcf0" stroke-width="1.4"/>
    </svg>
<div class="t" style="left:46px;top:823px;">Печать ценников</div>
<svg class="a" style="left:23.5px;top:847px;" width="17" height="15" viewBox="0 0 17 15" fill="none" stroke-linecap="round" stroke-linejoin="round">
      <path d="M8.5 1.2 L15.5 5.5 L8.5 9.8 L1.5 5.5 Z" stroke="#333" stroke-width="1.3"/>
      <path d="M1.5 9.3 L8.5 13.6 L15.5 9.3" stroke="#5bbcf0" stroke-width="1.4"/>
    </svg>
<div class="t" style="left:46px;top:849px;">Типы ценников</div>
<svg class="a" style="left:8px;top:872px;" width="18" height="16" viewBox="0 0 18 16" fill="none" stroke-linecap="round" stroke-linejoin="round">
      <path d="M1.5 10 V2.5 Q1.5 1.5 2.5 1.5 H5.5 L7 3.5 H11.5 Q12.5 3.5 12.5 4.5 V5.5" stroke="#5bbcf0" stroke-width="1.4"/>
      <path d="M4.5 7.5 H15.5 L12.5 14 H1.5 Z" stroke="#333" stroke-width="1.5"/>
    </svg>
<div class="t" style="left:30px;top:875px;">ABC-анализ</div>
<svg class="a" style="left:23.5px;top:899px;" width="17" height="15" viewBox="0 0 17 15" fill="none" stroke-linecap="round" stroke-linejoin="round">
      <path d="M8.5 1.2 L15.5 5.5 L8.5 9.8 L1.5 5.5 Z" stroke="#333" stroke-width="1.3"/>
      <path d="M1.5 9.3 L8.5 13.6 L15.5 9.3" stroke="#5bbcf0" stroke-width="1.4"/>
    </svg>
<div class="t" style="left:46px;top:901px;">Операции ABC-отчет</div>
<svg class="a" style="left:23.5px;top:925px;" width="17" height="15" viewBox="0 0 17 15" fill="none" stroke-linecap="round" stroke-linejoin="round">
      <path d="M8.5 1.2 L15.5 5.5 L8.5 9.8 L1.5 5.5 Z" stroke="#333" stroke-width="1.3"/>
      <path d="M1.5 9.3 L8.5 13.6 L15.5 9.3" stroke="#5bbcf0" stroke-width="1.4"/>
    </svg>
<div class="t" style="left:46px;top:927px;">ABC-отчеты</div>
<div class="a" style="left:266px;top:107px;width:8px;height:839px;background:#d9d9d9"></div>
<div class="a" style="left:0px;top:946px;width:266px;height:7px;background:#d9d9d9"></div>
<div class="a" style="left:274px;top:60px;width:1px;height:893px;background:#cfcfcf"></div>
<div class="a" style="left:277px;top:84px;width:1589px;height:1px;background:#d2d2d2"></div>
<div class="a" style="left:282px;top:62px;width:103px;height:22px;border:1px solid #d2d2d2;border-bottom:none;border-radius:4px 4px 0 0;background:#f2f2f2"></div>
<svg class="a" style="left:293px;top:66px;" width="17" height="15" viewBox="0 0 17 15" fill="none" stroke-linecap="round" stroke-linejoin="round">
      <path d="M8.5 1.2 L15.5 5.5 L8.5 9.8 L1.5 5.5 Z" stroke="#333" stroke-width="1.3"/>
      <path d="M1.5 9.3 L8.5 13.6 L15.5 9.3" stroke="#5bbcf0" stroke-width="1.4"/>
    </svg>
<div class="t" style="left:315px;top:68px;color:#222">Прайсы</div>
<div class="a" style="left:388px;top:62px;width:94px;height:22px;border:1px solid #d2d2d2;border-bottom:none;border-radius:4px 4px 0 0;background:#f2f2f2"></div>
<svg class="a" style="left:399px;top:66px;" width="17" height="15" viewBox="0 0 17 15" fill="none" stroke-linecap="round" stroke-linejoin="round">
      <path d="M8.5 1.2 L15.5 5.5 L8.5 9.8 L1.5 5.5 Z" stroke="#333" stroke-width="1.3"/>
      <path d="M1.5 9.3 L8.5 13.6 L15.5 9.3" stroke="#5bbcf0" stroke-width="1.4"/>
    </svg>
<div class="t" style="left:421px;top:68px;color:#222">Прайс</div>
<div class="a" style="left:485px;top:62px;width:142px;height:22px;border:1px solid #d2d2d2;border-bottom:none;border-radius:4px 4px 0 0;background:#d6e4e9"></div>
<svg class="a" style="left:496px;top:66px;" width="17" height="15" viewBox="0 0 17 15" fill="none" stroke-linecap="round" stroke-linejoin="round">
      <path d="M8.5 1.2 L15.5 5.5 L8.5 9.8 L1.5 5.5 Z" stroke="#333" stroke-width="1.3"/>
      <path d="M1.5 9.3 L8.5 13.6 L15.5 9.3" stroke="#5bbcf0" stroke-width="1.4"/>
    </svg>
<div class="t" style="left:518px;top:68px;color:#222">Акты расценки</div>
<svg class="a" style="left:362px;top:70px;" width="9" height="9" viewBox="0 0 9 9" fill="none" stroke-linecap="round" stroke-linejoin="round"><path d="M1.3 1.3 L7.7 7.7 M7.7 1.3 L1.3 7.7" stroke="#7a7a7a" stroke-width="1"/></svg>
<svg class="a" style="left:462px;top:70px;" width="9" height="9" viewBox="0 0 9 9" fill="none" stroke-linecap="round" stroke-linejoin="round"><path d="M1.3 1.3 L7.7 7.7 M7.7 1.3 L1.3 7.7" stroke="#7a7a7a" stroke-width="1"/></svg>
<svg class="a" style="left:606px;top:70px;" width="9" height="9" viewBox="0 0 9 9" fill="none" stroke-linecap="round" stroke-linejoin="round"><path d="M1.3 1.3 L7.7 7.7 M7.7 1.3 L1.3 7.7" stroke="#7a7a7a" stroke-width="1"/></svg>
<div class="a" style="left:281px;top:98px;width:3px;height:1px;background:#cfcfcf"></div>
<div class="a" style="left:378px;top:98px;width:1484px;height:1px;background:#d2d2d2"></div>
<svg class="a" style="left:287px;top:93px;" width="11" height="11" viewBox="0 0 11 11" fill="none" stroke-linecap="round" stroke-linejoin="round"><circle cx="5.5" cy="5.5" r="4.5" stroke="#999" stroke-width="1"/><path d="M3 5.5 H8" stroke="#999" stroke-width="1"/></svg>
<div class="t" style="left:303px;top:93px;color:#9a9a9a">Акт расценки</div>
<svg class="a" style="left:1812px;top:63px;" width="20" height="20" viewBox="0 0 20 20" fill="none" stroke-linecap="round" stroke-linejoin="round">
      <path d="M2.5 17.5 L3.5 13 L14 2.5 L17.5 6 L7 16.5 Z" stroke="#333" stroke-width="1.2"/>
      <path d="M11.5 5 L15 8.5" stroke="#5bbcf0" stroke-width="1.2"/>
    </svg>
<svg class="a" style="left:1841px;top:64px;" width="18" height="18" viewBox="0 0 18 18" fill="none" stroke-linecap="round" stroke-linejoin="round">
      <path d="M1.5 5.5 V1.5 H5.5" stroke="#333" stroke-width="1.4" stroke-linecap="butt" stroke-linejoin="miter"/>
      <path d="M12.5 1.5 H16.5 V5.5" stroke="#5bbcf0" stroke-width="1.4" stroke-linecap="butt" stroke-linejoin="miter"/>
      <path d="M1.5 12.5 V16.5 H5.5" stroke="#5bbcf0" stroke-width="1.4" stroke-linecap="butt" stroke-linejoin="miter"/>
      <path d="M12.5 16.5 H16.5 V12.5" stroke="#333" stroke-width="1.4" stroke-linecap="butt" stroke-linejoin="miter"/>
    </svg>
<div class="a" style="left:1868px;top:60px;width:1px;height:893px;background:#cfcfcf"></div>
<div class="a" style="left:281px;top:113px;width:1581px;height:436px;background:#fff;border:1px solid #2f80c2;border-radius:4px;overflow:hidden"><div class="a" style="left:0;top:0;width:1571px;height:54px;background:#f2f2f2"></div></div>
<div class="a" style="left:1725px;top:168px;width:72px;height:371px;background:#e0fbfc"></div>
<div class="a" style="left:282px;top:429px;width:1571px;height:22px;background:#d5e5ea"></div>
<div class="a" style="left:1725px;top:429px;width:72px;height:22px;background:#cce1e6"></div>
<div class="a" style="left:282px;top:168px;width:1571px;height:1px;background:#dcdcdc"></div>
<div class="a" style="left:282px;top:187px;width:1571px;height:1px;background:#e3e3e3"></div>
<div class="a" style="left:282px;top:209px;width:1571px;height:1px;background:#e3e3e3"></div>
<div class="a" style="left:282px;top:231px;width:1571px;height:1px;background:#e3e3e3"></div>
<div class="a" style="left:282px;top:253px;width:1571px;height:1px;background:#e3e3e3"></div>
<div class="a" style="left:282px;top:275px;width:1571px;height:1px;background:#e3e3e3"></div>
<div class="a" style="left:282px;top:297px;width:1571px;height:1px;background:#e3e3e3"></div>
<div class="a" style="left:282px;top:319px;width:1571px;height:1px;background:#e3e3e3"></div>
<div class="a" style="left:282px;top:341px;width:1571px;height:1px;background:#e3e3e3"></div>
<div class="a" style="left:282px;top:363px;width:1571px;height:1px;background:#e3e3e3"></div>
<div class="a" style="left:282px;top:385px;width:1571px;height:1px;background:#e3e3e3"></div>
<div class="a" style="left:282px;top:407px;width:1571px;height:1px;background:#e3e3e3"></div>
<div class="a" style="left:282px;top:429px;width:1571px;height:1px;background:#e3e3e3"></div>
<div class="a" style="left:282px;top:451px;width:1571px;height:1px;background:#e3e3e3"></div>
<div class="a" style="left:282px;top:473px;width:1571px;height:1px;background:#e3e3e3"></div>
<div class="a" style="left:282px;top:495px;width:1571px;height:1px;background:#e3e3e3"></div>
<div class="a" style="left:282px;top:517px;width:1571px;height:1px;background:#e3e3e3"></div>
<div class="a" style="left:282px;top:539px;width:1571px;height:1px;background:#e3e3e3"></div>
<div class="a" style="left:324px;top:114px;width:1px;height:54px;background:#dddddd"></div>
<div class="a" style="left:324px;top:169px;width:1px;height:370px;background:#e3e3e3"></div>
<div class="a" style="left:367px;top:114px;width:1px;height:54px;background:#dddddd"></div>
<div class="a" style="left:367px;top:169px;width:1px;height:370px;background:#e3e3e3"></div>
<div class="a" style="left:426px;top:114px;width:1px;height:54px;background:#dddddd"></div>
<div class="a" style="left:426px;top:169px;width:1px;height:370px;background:#e3e3e3"></div>
<div class="a" style="left:452px;top:114px;width:1px;height:54px;background:#dddddd"></div>
<div class="a" style="left:452px;top:169px;width:1px;height:370px;background:#e3e3e3"></div>
<div class="a" style="left:503px;top:114px;width:1px;height:54px;background:#dddddd"></div>
<div class="a" style="left:503px;top:169px;width:1px;height:370px;background:#e3e3e3"></div>
<div class="a" style="left:538px;top:114px;width:1px;height:54px;background:#dddddd"></div>
<div class="a" style="left:538px;top:169px;width:1px;height:370px;background:#e3e3e3"></div>
<div class="a" style="left:674px;top:114px;width:1px;height:54px;background:#dddddd"></div>
<div class="a" style="left:674px;top:169px;width:1px;height:370px;background:#e3e3e3"></div>
<div class="a" style="left:875px;top:114px;width:1px;height:54px;background:#dddddd"></div>
<div class="a" style="left:875px;top:169px;width:1px;height:370px;background:#e3e3e3"></div>
<div class="a" style="left:947px;top:114px;width:1px;height:54px;background:#dddddd"></div>
<div class="a" style="left:947px;top:169px;width:1px;height:370px;background:#e3e3e3"></div>
<div class="a" style="left:1051px;top:114px;width:1px;height:54px;background:#dddddd"></div>
<div class="a" style="left:1051px;top:169px;width:1px;height:370px;background:#e3e3e3"></div>
<div class="a" style="left:1155px;top:114px;width:1px;height:54px;background:#dddddd"></div>
<div class="a" style="left:1155px;top:169px;width:1px;height:370px;background:#e3e3e3"></div>
<div class="a" style="left:1214px;top:114px;width:1px;height:54px;background:#dddddd"></div>
<div class="a" style="left:1214px;top:169px;width:1px;height:370px;background:#e3e3e3"></div>
<div class="a" style="left:1415px;top:114px;width:1px;height:54px;background:#dddddd"></div>
<div class="a" style="left:1415px;top:169px;width:1px;height:370px;background:#e3e3e3"></div>
<div class="a" style="left:1458px;top:114px;width:1px;height:54px;background:#dddddd"></div>
<div class="a" style="left:1458px;top:169px;width:1px;height:370px;background:#e3e3e3"></div>
<div class="a" style="left:1594px;top:114px;width:1px;height:54px;background:#dddddd"></div>
<div class="a" style="left:1594px;top:169px;width:1px;height:370px;background:#e3e3e3"></div>
<div class="a" style="left:1653px;top:114px;width:1px;height:54px;background:#dddddd"></div>
<div class="a" style="left:1653px;top:169px;width:1px;height:370px;background:#e3e3e3"></div>
<div class="a" style="left:1725px;top:114px;width:1px;height:54px;background:#dddddd"></div>
<div class="a" style="left:1725px;top:169px;width:1px;height:370px;background:#e3e3e3"></div>
<div class="a" style="left:1797px;top:114px;width:1px;height:54px;background:#dddddd"></div>
<div class="a" style="left:1797px;top:169px;width:1px;height:370px;background:#e3e3e3"></div>
<div class="a" style="left:1840px;top:114px;width:1px;height:54px;background:#dddddd"></div>
<div class="a" style="left:1840px;top:169px;width:1px;height:370px;background:#e3e3e3"></div>
<div class="a" style="left:1852px;top:114px;width:1px;height:54px;background:#dddddd"></div>
<div class="a" style="left:1852px;top:169px;width:1px;height:370px;background:#e3e3e3"></div>
<div class="clip" style="left:282px;width:42px;text-align:center;top:127px;color:#222">Закры</div>
<div class="clip" style="left:282px;width:42px;text-align:center;top:143px;color:#222">т</div>
<svg class="a" style="left:318px;top:162px" width="6" height="6"><path d="M6 0 V6 H0 Z" fill="#2b7cc0"/></svg>
<div class="clip" style="left:325px;width:42px;text-align:center;top:127px;color:#222">Прове</div>
<div class="clip" style="left:325px;width:42px;text-align:center;top:143px;color:#222">ден</div>
<svg class="a" style="left:361px;top:162px" width="6" height="6"><path d="M6 0 V6 H0 Z" fill="#2b7cc0"/></svg>
<div class="clip" style="left:368px;width:58px;text-align:center;top:135px;color:#222">Номер</div>
<svg class="a" style="left:420px;top:162px" width="6" height="6"><path d="M6 0 V6 H0 Z" fill="#2b7cc0"/></svg>
<div class="clip" style="left:427px;width:25px;text-align:center;top:127px;color:#222">Сер</div>
<div class="clip" style="left:427px;width:25px;text-align:center;top:143px;color:#222">ия</div>
<svg class="a" style="left:446px;top:162px" width="6" height="6"><path d="M6 0 V6 H0 Z" fill="#2b7cc0"/></svg>
<div class="clip" style="left:453px;width:50px;text-align:center;top:119px;color:#222">Дата</div>
<div class="clip" style="left:453px;width:50px;text-align:center;top:135px;color:#222">докуме</div>
<div class="clip" style="left:453px;width:50px;text-align:center;top:151px;color:#222">нта</div>
<svg class="a" style="left:497px;top:162px" width="6" height="6"><path d="M6 0 V6 H0 Z" fill="#2b7cc0"/></svg>
<div class="clip" style="left:504px;width:34px;text-align:center;top:116px;color:#222">Врем</div>
<div class="clip" style="left:504px;width:34px;text-align:center;top:132px;color:#222">я</div>
<div class="clip" style="left:504px;width:34px;text-align:center;top:148px;color:#222">доку</div>
<svg class="a" style="left:532px;top:162px" width="6" height="6"><path d="M6 0 V6 H0 Z" fill="#2b7cc0"/></svg>
<div class="clip" style="left:539px;width:135px;text-align:center;top:135px;color:#222">Склад</div>
<svg class="a" style="left:668px;top:162px" width="6" height="6"><path d="M6 0 V6 H0 Z" fill="#2b7cc0"/></svg>
<div class="clip" style="left:675px;width:200px;text-align:center;top:135px;color:#222">Операция</div>
<div class="clip" style="left:876px;width:71px;text-align:center;top:135px;color:#222">Валюта</div>
<svg class="a" style="left:941px;top:162px" width="6" height="6"><path d="M6 0 V6 H0 Z" fill="#2b7cc0"/></svg>
<div class="clip" style="left:948px;width:103px;text-align:center;top:127px;color:#222">Вид цен</div>
<div class="clip" style="left:948px;width:103px;text-align:center;top:143px;color:#222">(управленческий)</div>
<svg class="a" style="left:1045px;top:162px" width="6" height="6"><path d="M6 0 V6 H0 Z" fill="#2b7cc0"/></svg>
<div class="clip" style="left:1052px;width:103px;text-align:center;top:127px;color:#222">Вид цен</div>
<div class="clip" style="left:1052px;width:103px;text-align:center;top:143px;color:#222">(надбавка)</div>
<svg class="a" style="left:1149px;top:162px" width="6" height="6"><path d="M6 0 V6 H0 Z" fill="#2b7cc0"/></svg>
<div class="clip" style="left:1156px;width:58px;text-align:center;top:127px;color:#222">Кол-во</div>
<div class="clip" style="left:1156px;width:58px;text-align:center;top:143px;color:#222">строк</div>
<div class="clip" style="left:1215px;width:200px;text-align:center;top:135px;color:#222">Примечание</div>
<svg class="a" style="left:1409px;top:162px" width="6" height="6"><path d="M6 0 V6 H0 Z" fill="#2b7cc0"/></svg>
<div class="clip" style="left:1416px;width:42px;text-align:center;top:127px;color:#222">Обрат</div>
<div class="clip" style="left:1416px;width:42px;text-align:center;top:143px;color:#222">ный</div>
<div class="clip" style="left:1459px;width:135px;text-align:center;top:135px;color:#222">Поставщик</div>
<div class="clip" style="left:1595px;width:58px;text-align:center;top:127px;color:#222">Кол-во</div>
<div class="clip" style="left:1595px;width:58px;text-align:center;top:143px;color:#222">(всего)</div>
<div class="clip" style="left:1654px;width:71px;text-align:center;top:127px;color:#222">Сумма</div>
<div class="clip" style="left:1654px;width:71px;text-align:center;top:143px;color:#222">поставщика</div>
<div class="clip" style="left:1726px;width:71px;text-align:center;top:127px;color:#222">Сумма</div>
<div class="clip" style="left:1726px;width:71px;text-align:center;top:143px;color:#222">розничная</div>
<div class="clip" style="left:1798px;width:42px;text-align:center;top:116px;color:#222">Не</div>
<div class="clip" style="left:1798px;width:42px;text-align:center;top:132px;color:#222">измен</div>
<div class="clip" style="left:1798px;width:42px;text-align:center;top:148px;color:#222">ять</div>
<svg class="a" style="left:1834px;top:162px" width="6" height="6"><path d="M6 0 V6 H0 Z" fill="#2b7cc0"/></svg>
<div class="a" style="left:297px;top:170px;width:13px;height:13px;border:1.3px solid #707070;border-radius:2.5px;background:#fff"></div>
<svg class="a" style="left:340px;top:170px" width="13" height="13" viewBox="0 0 13 13"><rect x="0" y="0" width="13" height="13" rx="2" fill="#4766f7"/><path d="M3 6.6 L5.4 8.8 L10 3.6" stroke="#fff" stroke-width="1.9" fill="none" stroke-linecap="square"/></svg>
<div class="clip" style="left:371px;top:171px;width:55px;">0000332</div>
<div class="clip" style="left:430px;top:171px;width:22px;">ПС</div>
<div class="clip" style="left:456px;top:171px;width:47px;">13.03.24</div>
<div class="clip" style="left:507px;top:171px;width:31px;">14:38</div>
<div class="clip" style="left:542px;top:171px;width:132px;">Магазин 13</div>
<div class="clip" style="left:678px;top:171px;width:197px;">Расценка при поставке</div>
<div class="clip" style="left:879px;top:171px;width:68px;">Белорусский</div>
<div class="clip" style="left:1155px;top:171px;width:56px;text-align:right;">2</div>
<div class="a" style="left:1431px;top:170px;width:13px;height:13px;border:1.3px solid #707070;border-radius:2.5px;background:#fff"></div>
<div class="clip" style="left:1462px;top:171px;width:132px;">AzizaDi</div>
<div class="a" style="left:1812px;top:170px;width:13px;height:13px;border:1.3px solid #707070;border-radius:2.5px;background:#fff"></div>
<div class="a" style="left:297px;top:192px;width:13px;height:13px;border:1.3px solid #707070;border-radius:2.5px;background:#fff"></div>
<svg class="a" style="left:340px;top:192px" width="13" height="13" viewBox="0 0 13 13"><rect x="0" y="0" width="13" height="13" rx="2" fill="#4766f7"/><path d="M3 6.6 L5.4 8.8 L10 3.6" stroke="#fff" stroke-width="1.9" fill="none" stroke-linecap="square"/></svg>
<div class="clip" style="left:371px;top:193px;width:55px;">00048</div>
<div class="clip" style="left:430px;top:193px;width:22px;">ПЗ</div>
<div class="clip" style="left:456px;top:193px;width:47px;">13.03.24</div>
<div class="clip" style="left:507px;top:193px;width:31px;">10:59</div>
<div class="clip" style="left:542px;top:193px;width:132px;">Кафетерий</div>
<div class="clip" style="left:678px;top:193px;width:197px;">Расценка собственного производст</div>
<div class="clip" style="left:879px;top:193px;width:68px;">Белорусский</div>
<div class="a" style="left:1431px;top:192px;width:13px;height:13px;border:1.3px solid #707070;border-radius:2.5px;background:#fff"></div>
<div class="clip" style="left:1462px;top:193px;width:132px;">ЗАО "ЛюксСофтТорг"</div>
<div class="a" style="left:1812px;top:192px;width:13px;height:13px;border:1.3px solid #707070;border-radius:2.5px;background:#fff"></div>
<div class="a" style="left:297px;top:214px;width:13px;height:13px;border:1.3px solid #707070;border-radius:2.5px;background:#fff"></div>
<svg class="a" style="left:340px;top:214px" width="13" height="13" viewBox="0 0 13 13"><rect x="0" y="0" width="13" height="13" rx="2" fill="#4766f7"/><path d="M3 6.6 L5.4 8.8 L10 3.6" stroke="#fff" stroke-width="1.9" fill="none" stroke-linecap="square"/></svg>
<div class="clip" style="left:371px;top:215px;width:55px;">0000336</div>
<div class="clip" style="left:430px;top:215px;width:22px;">ПС</div>
<div class="clip" style="left:456px;top:215px;width:47px;">01.03.24</div>
<div class="clip" style="left:507px;top:215px;width:31px;">11:18</div>
<div class="clip" style="left:542px;top:215px;width:132px;">Магазин 12</div>
<div class="clip" style="left:678px;top:215px;width:197px;">Расценка при поставке</div>
<div class="clip" style="left:879px;top:215px;width:68px;">Белорусский</div>
<div class="clip" style="left:1155px;top:215px;width:56px;text-align:right;">3</div>
<div class="a" style="left:1431px;top:214px;width:13px;height:13px;border:1.3px solid #707070;border-radius:2.5px;background:#fff"></div>
<div class="clip" style="left:1462px;top:215px;width:132px;">АВАЛОНТОРГ ООО</div>
<div class="clip" style="left:1594px;top:215px;width:56px;text-align:right;">9</div>
<div class="clip" style="left:1653px;top:215px;width:69px;text-align:right;">792</div>
<div class="clip" style="left:1725px;top:215px;width:69px;text-align:right;">1 379,91</div>
<div class="a" style="left:1812px;top:214px;width:13px;height:13px;border:1.3px solid #707070;border-radius:2.5px;background:#fff"></div>
<div class="clip" style="left:1843px;top:215px;width:9px">Н</div>
<div class="a" style="left:297px;top:236px;width:13px;height:13px;border:1.3px solid #707070;border-radius:2.5px;background:#fff"></div>
<div class="a" style="left:340px;top:236px;width:13px;height:13px;border:1.3px solid #707070;border-radius:2.5px;background:#fff"></div>
<div class="clip" style="left:371px;top:237px;width:55px;">00055</div>
<div class="clip" style="left:430px;top:237px;width:22px;">ПС</div>
<div class="clip" style="left:456px;top:237px;width:47px;">13.03.24</div>
<div class="clip" style="left:507px;top:237px;width:31px;">17:52</div>
<div class="clip" style="left:542px;top:237px;width:132px;">ЛюксСофтТрейд2</div>
<div class="clip" style="left:678px;top:237px;width:197px;">Расценка при поставке</div>
<div class="clip" style="left:879px;top:237px;width:68px;">Белорусский</div>
<div class="clip" style="left:1155px;top:237px;width:56px;text-align:right;">3</div>
<svg class="a" style="left:1431px;top:236px" width="13" height="13" viewBox="0 0 13 13"><rect x="0" y="0" width="13" height="13" rx="2" fill="#4766f7"/><path d="M3 6.6 L5.4 8.8 L10 3.6" stroke="#fff" stroke-width="1.9" fill="none" stroke-linecap="square"/></svg>
<div class="clip" style="left:1462px;top:237px;width:132px;">ДАНОН БЕЛ ИООО</div>
<div class="clip" style="left:1594px;top:237px;width:56px;text-align:right;">3</div>
<div class="clip" style="left:1653px;top:237px;width:69px;text-align:right;">2,97</div>
<div class="clip" style="left:1725px;top:237px;width:69px;text-align:right;">4,47</div>
<div class="a" style="left:1812px;top:236px;width:13px;height:13px;border:1.3px solid #707070;border-radius:2.5px;background:#fff"></div>
<div class="a" style="left:297px;top:258px;width:13px;height:13px;border:1.3px solid #707070;border-radius:2.5px;background:#fff"></div>
<svg class="a" style="left:340px;top:258px" width="13" height="13" viewBox="0 0 13 13"><rect x="0" y="0" width="13" height="13" rx="2" fill="#4766f7"/><path d="M3 6.6 L5.4 8.8 L10 3.6" stroke="#fff" stroke-width="1.9" fill="none" stroke-linecap="square"/></svg>
<div class="clip" style="left:371px;top:259px;width:55px;">0000337</div>
<div class="clip" style="left:430px;top:259px;width:22px;">ПС</div>
<div class="clip" style="left:456px;top:259px;width:47px;">12.03.24</div>
<div class="clip" style="left:507px;top:259px;width:31px;">11:09</div>
<div class="clip" style="left:542px;top:259px;width:132px;">Магазин 12</div>
<div class="clip" style="left:678px;top:259px;width:197px;">Расценка при поставке</div>
<div class="clip" style="left:879px;top:259px;width:68px;">Белорусский</div>
<div class="clip" style="left:1155px;top:259px;width:56px;text-align:right;">1</div>
<div class="a" style="left:1431px;top:258px;width:13px;height:13px;border:1.3px solid #707070;border-radius:2.5px;background:#fff"></div>
<div class="clip" style="left:1462px;top:259px;width:132px;">БЕЛХОЗТОРГ ОАО</div>
<div class="clip" style="left:1594px;top:259px;width:56px;text-align:right;">4 000</div>
<div class="clip" style="left:1653px;top:259px;width:69px;text-align:right;">160</div>
<div class="clip" style="left:1725px;top:259px;width:69px;text-align:right;">480</div>
<div class="a" style="left:1812px;top:258px;width:13px;height:13px;border:1.3px solid #707070;border-radius:2.5px;background:#fff"></div>
<div class="clip" style="left:1843px;top:259px;width:9px">Н</div>
<div class="a" style="left:297px;top:280px;width:13px;height:13px;border:1.3px solid #707070;border-radius:2.5px;background:#fff"></div>
<svg class="a" style="left:340px;top:280px" width="13" height="13" viewBox="0 0 13 13"><rect x="0" y="0" width="13" height="13" rx="2" fill="#4766f7"/><path d="M3 6.6 L5.4 8.8 L10 3.6" stroke="#fff" stroke-width="1.9" fill="none" stroke-linecap="square"/></svg>
<div class="clip" style="left:371px;top:281px;width:55px;">0000338</div>
<div class="clip" style="left:430px;top:281px;width:22px;">ПС</div>
<div class="clip" style="left:456px;top:281px;width:47px;">11.03.24</div>
<div class="clip" style="left:507px;top:281px;width:31px;">11:15</div>
<div class="clip" style="left:542px;top:281px;width:132px;">Магазин 12</div>
<div class="clip" style="left:678px;top:281px;width:197px;">Расценка при поставке</div>
<div class="clip" style="left:879px;top:281px;width:68px;">Белорусский</div>
<div class="clip" style="left:1155px;top:281px;width:56px;text-align:right;">1</div>
<div class="a" style="left:1431px;top:280px;width:13px;height:13px;border:1.3px solid #707070;border-radius:2.5px;background:#fff"></div>
<div class="clip" style="left:1462px;top:281px;width:132px;">AzizaDi</div>
<div class="clip" style="left:1594px;top:281px;width:56px;text-align:right;">100</div>
<div class="clip" style="left:1653px;top:281px;width:69px;text-align:right;">5</div>
<div class="clip" style="left:1725px;top:281px;width:69px;text-align:right;">14</div>
<div class="a" style="left:1812px;top:280px;width:13px;height:13px;border:1.3px solid #707070;border-radius:2.5px;background:#fff"></div>
<div class="clip" style="left:1843px;top:281px;width:9px">Н</div>
<div class="a" style="left:297px;top:302px;width:13px;height:13px;border:1.3px solid #707070;border-radius:2.5px;background:#fff"></div>
<svg class="a" style="left:340px;top:302px" width="13" height="13" viewBox="0 0 13 13"><rect x="0" y="0" width="13" height="13" rx="2" fill="#4766f7"/><path d="M3 6.6 L5.4 8.8 L10 3.6" stroke="#fff" stroke-width="1.9" fill="none" stroke-linecap="square"/></svg>
<div class="clip" style="left:371px;top:303px;width:55px;">00056</div>
<div class="clip" style="left:430px;top:303px;width:22px;">ПС</div>
<div class="clip" style="left:456px;top:303px;width:47px;">13.03.24</div>
<div class="clip" style="left:507px;top:303px;width:31px;">11:09</div>
<div class="clip" style="left:542px;top:303px;width:132px;">Магазин 12</div>
<div class="clip" style="left:678px;top:303px;width:197px;">Расценка при поставке</div>
<div class="clip" style="left:879px;top:303px;width:68px;">Белорусский</div>
<div class="clip" style="left:1155px;top:303px;width:56px;text-align:right;">1</div>
<svg class="a" style="left:1431px;top:302px" width="13" height="13" viewBox="0 0 13 13"><rect x="0" y="0" width="13" height="13" rx="2" fill="#4766f7"/><path d="M3 6.6 L5.4 8.8 L10 3.6" stroke="#fff" stroke-width="1.9" fill="none" stroke-linecap="square"/></svg>
<div class="clip" style="left:1462px;top:303px;width:132px;">БЕЛХОЗТОРГ ОАО</div>
<div class="clip" style="left:1594px;top:303px;width:56px;text-align:right;">200</div>
<div class="clip" style="left:1653px;top:303px;width:69px;text-align:right;">8</div>
<div class="clip" style="left:1725px;top:303px;width:69px;text-align:right;">24</div>
<div class="a" style="left:1812px;top:302px;width:13px;height:13px;border:1.3px solid #707070;border-radius:2.5px;background:#fff"></div>
<div class="a" style="left:297px;top:324px;width:13px;height:13px;border:1.3px solid #707070;border-radius:2.5px;background:#fff"></div>
<svg class="a" style="left:340px;top:324px" width="13" height="13" viewBox="0 0 13 13"><rect x="0" y="0" width="13" height="13" rx="2" fill="#4766f7"/><path d="M3 6.6 L5.4 8.8 L10 3.6" stroke="#fff" stroke-width="1.9" fill="none" stroke-linecap="square"/></svg>
<div class="clip" style="left:371px;top:325px;width:55px;">0000339</div>
<div class="clip" style="left:430px;top:325px;width:22px;">ПС</div>
<div class="clip" style="left:456px;top:325px;width:47px;">13.03.24</div>
<div class="clip" style="left:507px;top:325px;width:31px;">17:14</div>
<div class="clip" style="left:542px;top:325px;width:132px;">Магазин 12</div>
<div class="clip" style="left:678px;top:325px;width:197px;">Расценка при поставке</div>
<div class="clip" style="left:879px;top:325px;width:68px;">Белорусский</div>
<div class="clip" style="left:1155px;top:325px;width:56px;text-align:right;">1</div>
<div class="a" style="left:1431px;top:324px;width:13px;height:13px;border:1.3px solid #707070;border-radius:2.5px;background:#fff"></div>
<div class="clip" style="left:1462px;top:325px;width:132px;">АГРОКОМБИНАТ КОЛОС</div>
<div class="clip" style="left:1594px;top:325px;width:56px;text-align:right;">1</div>
<div class="clip" style="left:1653px;top:325px;width:69px;text-align:right;">20</div>
<div class="clip" style="left:1725px;top:325px;width:69px;text-align:right;">26,99</div>
<div class="a" style="left:1812px;top:324px;width:13px;height:13px;border:1.3px solid #707070;border-radius:2.5px;background:#fff"></div>
<div class="clip" style="left:1843px;top:325px;width:9px">Н</div>
<div class="a" style="left:297px;top:346px;width:13px;height:13px;border:1.3px solid #707070;border-radius:2.5px;background:#fff"></div>
<svg class="a" style="left:340px;top:346px" width="13" height="13" viewBox="0 0 13 13"><rect x="0" y="0" width="13" height="13" rx="2" fill="#4766f7"/><path d="M3 6.6 L5.4 8.8 L10 3.6" stroke="#fff" stroke-width="1.9" fill="none" stroke-linecap="square"/></svg>
<div class="clip" style="left:371px;top:347px;width:55px;">0000118</div>
<div class="clip" style="left:430px;top:347px;width:22px;">ПС</div>
<div class="clip" style="left:456px;top:347px;width:47px;">13.03.24</div>
<div class="clip" style="left:507px;top:347px;width:31px;">11:14</div>
<div class="clip" style="left:542px;top:347px;width:132px;">Магазин 12</div>
<div class="clip" style="left:678px;top:347px;width:197px;">На приходе</div>
<div class="clip" style="left:879px;top:347px;width:68px;">Белорусский</div>
<div class="clip" style="left:1155px;top:347px;width:56px;text-align:right;">1</div>
<svg class="a" style="left:1431px;top:346px" width="13" height="13" viewBox="0 0 13 13"><rect x="0" y="0" width="13" height="13" rx="2" fill="#4766f7"/><path d="M3 6.6 L5.4 8.8 L10 3.6" stroke="#fff" stroke-width="1.9" fill="none" stroke-linecap="square"/></svg>
<div class="clip" style="left:1462px;top:347px;width:132px;">ОДО "ЛюксСофтСервис"</div>
<div class="clip" style="left:1594px;top:347px;width:56px;text-align:right;">1</div>
<div class="clip" style="left:1653px;top:347px;width:69px;text-align:right;">169,99</div>
<div class="clip" style="left:1725px;top:347px;width:69px;text-align:right;">169,99</div>
<div class="a" style="left:1812px;top:346px;width:13px;height:13px;border:1.3px solid #707070;border-radius:2.5px;background:#fff"></div>
<div class="a" style="left:297px;top:368px;width:13px;height:13px;border:1.3px solid #707070;border-radius:2.5px;background:#fff"></div>
<svg class="a" style="left:340px;top:368px" width="13" height="13" viewBox="0 0 13 13"><rect x="0" y="0" width="13" height="13" rx="2" fill="#4766f7"/><path d="M3 6.6 L5.4 8.8 L10 3.6" stroke="#fff" stroke-width="1.9" fill="none" stroke-linecap="square"/></svg>
<div class="clip" style="left:371px;top:369px;width:55px;">0000340</div>
<div class="clip" style="left:430px;top:369px;width:22px;">ПС</div>
<div class="clip" style="left:456px;top:369px;width:47px;">13.03.24</div>
<div class="clip" style="left:507px;top:369px;width:31px;">17:23</div>
<div class="clip" style="left:542px;top:369px;width:132px;">Магазин 12</div>
<div class="clip" style="left:678px;top:369px;width:197px;">Расценка при поставке</div>
<div class="clip" style="left:879px;top:369px;width:68px;">Белорусский</div>
<div class="clip" style="left:1155px;top:369px;width:56px;text-align:right;">4</div>
<div class="a" style="left:1431px;top:368px;width:13px;height:13px;border:1.3px solid #707070;border-radius:2.5px;background:#fff"></div>
<div class="clip" style="left:1462px;top:369px;width:132px;">ГП МОГОСТ</div>
<div class="clip" style="left:1594px;top:369px;width:56px;text-align:right;">5</div>
<div class="clip" style="left:1653px;top:369px;width:69px;text-align:right;">88,98</div>
<div class="clip" style="left:1725px;top:369px;width:69px;text-align:right;">156,29</div>
<div class="a" style="left:1812px;top:368px;width:13px;height:13px;border:1.3px solid #707070;border-radius:2.5px;background:#fff"></div>
<div class="clip" style="left:1843px;top:369px;width:9px">Н</div>
<div class="a" style="left:297px;top:390px;width:13px;height:13px;border:1.3px solid #707070;border-radius:2.5px;background:#fff"></div>
<svg class="a" style="left:340px;top:390px" width="13" height="13" viewBox="0 0 13 13"><rect x="0" y="0" width="13" height="13" rx="2" fill="#4766f7"/><path d="M3 6.6 L5.4 8.8 L10 3.6" stroke="#fff" stroke-width="1.9" fill="none" stroke-linecap="square"/></svg>
<div class="clip" style="left:371px;top:391px;width:55px;">00049</div>
<div class="clip" style="left:430px;top:391px;width:22px;">ПЗ</div>
<div class="clip" style="left:456px;top:391px;width:47px;">13.03.24</div>
<div class="clip" style="left:507px;top:391px;width:31px;">13:22</div>
<div class="clip" style="left:542px;top:391px;width:132px;">Кафетерий</div>
<div class="clip" style="left:678px;top:391px;width:197px;">Расценка собственного производст</div>
<div class="clip" style="left:879px;top:391px;width:68px;">Белорусский</div>
<div class="clip" style="left:1155px;top:391px;width:56px;text-align:right;">5</div>
<div class="a" style="left:1431px;top:390px;width:13px;height:13px;border:1.3px solid #707070;border-radius:2.5px;background:#fff"></div>
<div class="clip" style="left:1462px;top:391px;width:132px;">ЗАО "ЛюксСофтТорг"</div>
<div class="clip" style="left:1594px;top:391px;width:56px;text-align:right;">10</div>
<div class="clip" style="left:1653px;top:391px;width:69px;text-align:right;">14,73</div>
<div class="clip" style="left:1725px;top:391px;width:69px;text-align:right;">48,3</div>
<div class="a" style="left:1812px;top:390px;width:13px;height:13px;border:1.3px solid #707070;border-radius:2.5px;background:#fff"></div>
<div class="a" style="left:297px;top:412px;width:13px;height:13px;border:1.3px solid #707070;border-radius:2.5px;background:#fff"></div>
<svg class="a" style="left:340px;top:412px" width="13" height="13" viewBox="0 0 13 13"><rect x="0" y="0" width="13" height="13" rx="2" fill="#4766f7"/><path d="M3 6.6 L5.4 8.8 L10 3.6" stroke="#fff" stroke-width="1.9" fill="none" stroke-linecap="square"/></svg>
<div class="clip" style="left:371px;top:413px;width:55px;">002-20210</div>
<div class="clip" style="left:456px;top:413px;width:47px;">13.03.24</div>
<div class="clip" style="left:507px;top:413px;width:31px;">00:00</div>
<div class="clip" style="left:542px;top:413px;width:132px;">Магазин 12</div>
<div class="clip" style="left:678px;top:413px;width:197px;">Расценка при поставке</div>
<div class="clip" style="left:879px;top:413px;width:68px;">Белорусский</div>
<div class="clip" style="left:1155px;top:413px;width:56px;text-align:right;">1</div>
<div class="a" style="left:1431px;top:412px;width:13px;height:13px;border:1.3px solid #707070;border-radius:2.5px;background:#fff"></div>
<div class="clip" style="left:1462px;top:413px;width:132px;">ГП МОГОСТ</div>
<div class="clip" style="left:1594px;top:413px;width:56px;text-align:right;">4</div>
<div class="clip" style="left:1653px;top:413px;width:69px;text-align:right;">800</div>
<div class="clip" style="left:1725px;top:413px;width:69px;text-align:right;">1 079,96</div>
<div class="a" style="left:1812px;top:412px;width:13px;height:13px;border:1.3px solid #707070;border-radius:2.5px;background:#fff"></div>
<div class="clip" style="left:1843px;top:413px;width:9px">Н</div>
<div class="a" style="left:297px;top:434px;width:13px;height:13px;border:1.3px solid #707070;border-radius:2.5px;background:#fff"></div>
<div class="a" style="left:340px;top:434px;width:13px;height:13px;border:1.3px solid #707070;border-radius:2.5px;background:#fff"></div>
<div class="clip" style="left:371px;top:435px;width:55px;">00057</div>
<div class="clip" style="left:430px;top:435px;width:22px;">ПС</div>
<div class="clip" style="left:456px;top:435px;width:47px;">13.03.24</div>
<div class="clip" style="left:507px;top:435px;width:31px;">18:39</div>
<div class="clip" style="left:542px;top:435px;width:132px;">Магазин 11</div>
<div class="clip" style="left:678px;top:435px;width:197px;">Расценка при поставке</div>
<div class="clip" style="left:879px;top:435px;width:68px;">Белорусский</div>
<div class="clip" style="left:1155px;top:435px;width:56px;text-align:right;">1</div>
<svg class="a" style="left:1431px;top:434px" width="13" height="13" viewBox="0 0 13 13"><rect x="0" y="0" width="13" height="13" rx="2" fill="#4766f7"/><path d="M3 6.6 L5.4 8.8 L10 3.6" stroke="#fff" stroke-width="1.9" fill="none" stroke-linecap="square"/></svg>
<div class="clip" style="left:1462px;top:435px;width:132px;">МОРОЗПРОДУКТ СООО</div>
<div class="clip" style="left:1594px;top:435px;width:56px;text-align:right;">1</div>
<div class="clip" style="left:1653px;top:435px;width:69px;text-align:right;">0,96</div>
<div class="clip" style="left:1725px;top:435px;width:69px;text-align:right;">1,25</div>
<div class="a" style="left:1812px;top:434px;width:13px;height:13px;border:1.3px solid #707070;border-radius:2.5px;background:#fff"></div>
<div class="a" style="left:297px;top:456px;width:13px;height:13px;border:1.3px solid #707070;border-radius:2.5px;background:#fff"></div>
<svg class="a" style="left:340px;top:456px" width="13" height="13" viewBox="0 0 13 13"><rect x="0" y="0" width="13" height="13" rx="2" fill="#4766f7"/><path d="M3 6.6 L5.4 8.8 L10 3.6" stroke="#fff" stroke-width="1.9" fill="none" stroke-linecap="square"/></svg>
<div class="clip" style="left:371px;top:457px;width:55px;">7583728</div>
<div class="clip" style="left:430px;top:457px;width:22px;">ПС</div>
<div class="clip" style="left:456px;top:457px;width:47px;">13.03.24</div>
<div class="clip" style="left:507px;top:457px;width:31px;">18:22</div>
<div class="clip" style="left:542px;top:457px;width:132px;">ЛюксСофтТрейд2</div>
<div class="clip" style="left:678px;top:457px;width:197px;">Расценка при поставке</div>
<div class="clip" style="left:879px;top:457px;width:68px;">Белорусский</div>
<div class="clip" style="left:1155px;top:457px;width:56px;text-align:right;">2</div>
<svg class="a" style="left:1431px;top:456px" width="13" height="13" viewBox="0 0 13 13"><rect x="0" y="0" width="13" height="13" rx="2" fill="#4766f7"/><path d="M3 6.6 L5.4 8.8 L10 3.6" stroke="#fff" stroke-width="1.9" fill="none" stroke-linecap="square"/></svg>
<div class="clip" style="left:1462px;top:457px;width:132px;">ЗАО "ЛюксСофтТорг"</div>
<div class="clip" style="left:1594px;top:457px;width:56px;text-align:right;">35</div>
<div class="clip" style="left:1653px;top:457px;width:69px;text-align:right;">184,65</div>
<div class="clip" style="left:1725px;top:457px;width:69px;text-align:right;">174,15</div>
<div class="a" style="left:1812px;top:456px;width:13px;height:13px;border:1.3px solid #707070;border-radius:2.5px;background:#fff"></div>
<div class="a" style="left:297px;top:478px;width:13px;height:13px;border:1.3px solid #707070;border-radius:2.5px;background:#fff"></div>
<svg class="a" style="left:340px;top:478px" width="13" height="13" viewBox="0 0 13 13"><rect x="0" y="0" width="13" height="13" rx="2" fill="#4766f7"/><path d="M3 6.6 L5.4 8.8 L10 3.6" stroke="#fff" stroke-width="1.9" fill="none" stroke-linecap="square"/></svg>
<div class="clip" style="left:371px;top:479px;width:55px;">00058</div>
<div class="clip" style="left:430px;top:479px;width:22px;">ПС</div>
<div class="clip" style="left:456px;top:479px;width:47px;">13.03.24</div>
<div class="clip" style="left:507px;top:479px;width:31px;">01:50</div>
<div class="clip" style="left:542px;top:479px;width:132px;">ЛюксСофтТрейд2</div>
<div class="clip" style="left:678px;top:479px;width:197px;">Расценка при поставке</div>
<div class="clip" style="left:879px;top:479px;width:68px;">Белорусский</div>
<div class="clip" style="left:1155px;top:479px;width:56px;text-align:right;">3</div>
<svg class="a" style="left:1431px;top:478px" width="13" height="13" viewBox="0 0 13 13"><rect x="0" y="0" width="13" height="13" rx="2" fill="#4766f7"/><path d="M3 6.6 L5.4 8.8 L10 3.6" stroke="#fff" stroke-width="1.9" fill="none" stroke-linecap="square"/></svg>
<div class="clip" style="left:1462px;top:479px;width:132px;">ДАНОН БЕЛ ИООО</div>
<div class="clip" style="left:1594px;top:479px;width:56px;text-align:right;">3</div>
<div class="clip" style="left:1653px;top:479px;width:69px;text-align:right;">2,97</div>
<div class="clip" style="left:1725px;top:479px;width:69px;text-align:right;">4,47</div>
<div class="a" style="left:1812px;top:478px;width:13px;height:13px;border:1.3px solid #707070;border-radius:2.5px;background:#fff"></div>
<div class="a" style="left:297px;top:500px;width:13px;height:13px;border:1.3px solid #707070;border-radius:2.5px;background:#fff"></div>
<div class="a" style="left:340px;top:500px;width:13px;height:13px;border:1.3px solid #707070;border-radius:2.5px;background:#fff"></div>
<div class="clip" style="left:371px;top:501px;width:55px;">00124</div>
<div class="clip" style="left:430px;top:501px;width:22px;">ПС</div>
<div class="clip" style="left:456px;top:501px;width:47px;">13.03.24</div>
<div class="clip" style="left:507px;top:501px;width:31px;">08:26</div>
<div class="clip" style="left:542px;top:501px;width:132px;">Магазин 12</div>
<div class="clip" style="left:678px;top:501px;width:197px;">Расценка при поставке</div>
<div class="clip" style="left:879px;top:501px;width:68px;">Белорусский</div>
<div class="clip" style="left:1155px;top:501px;width:56px;text-align:right;">1</div>
<svg class="a" style="left:1431px;top:500px" width="13" height="13" viewBox="0 0 13 13"><rect x="0" y="0" width="13" height="13" rx="2" fill="#4766f7"/><path d="M3 6.6 L5.4 8.8 L10 3.6" stroke="#fff" stroke-width="1.9" fill="none" stroke-linecap="square"/></svg>
<div class="clip" style="left:1462px;top:501px;width:132px;">ОДО "ЛюксСофтСервис"</div>
<div class="clip" style="left:1594px;top:501px;width:56px;text-align:right;">155</div>
<div class="clip" style="left:1653px;top:501px;width:69px;text-align:right;">23 250</div>
<div class="a" style="left:1812px;top:500px;width:13px;height:13px;border:1.3px solid #707070;border-radius:2.5px;background:#fff"></div>
<div class="a" style="left:297px;top:522px;width:13px;height:13px;border:1.3px solid #707070;border-radius:2.5px;background:#fff"></div>
<div class="a" style="left:340px;top:522px;width:13px;height:13px;border:1.3px solid #707070;border-radius:2.5px;background:#fff"></div>
<div class="clip" style="left:371px;top:523px;width:55px;">00059</div>
<div class="clip" style="left:430px;top:523px;width:22px;">ПС</div>
<div class="clip" style="left:456px;top:523px;width:47px;">13.03.24</div>
<div class="clip" style="left:507px;top:523px;width:31px;">18:26</div>
<div class="clip" style="left:542px;top:523px;width:132px;">ЛюксСофтТрейд2</div>
<div class="clip" style="left:678px;top:523px;width:197px;">Расценка при поставке</div>
<div class="clip" style="left:879px;top:523px;width:68px;">Российский</div>
<div class="clip" style="left:1155px;top:523px;width:56px;text-align:right;">1</div>
<svg class="a" style="left:1431px;top:522px" width="13" height="13" viewBox="0 0 13 13"><rect x="0" y="0" width="13" height="13" rx="2" fill="#4766f7"/><path d="M3 6.6 L5.4 8.8 L10 3.6" stroke="#fff" stroke-width="1.9" fill="none" stroke-linecap="square"/></svg>
<div class="clip" style="left:1462px;top:523px;width:132px;">ПЕРСПЕКТИВА ООО</div>
<div class="clip" style="left:1594px;top:523px;width:56px;text-align:right;">20</div>
<div class="a" style="left:1812px;top:522px;width:13px;height:13px;border:1.3px solid #707070;border-radius:2.5px;background:#fff"></div>
<div class="a" style="left:674px;top:429px;width:202px;height:23px;border:1px solid #3f7fc0"></div>
<div class="a" style="left:282px;top:539px;width:1148px;height:8px;background:#d9d9d9"></div>
<div class="a" style="left:1853px;top:330px;width:8px;height:209px;background:#d9d9d9"></div>
<div class="a" style="left:1826px;top:172px;width:25px;height:22px;background:#fff;border:1px solid #d0d0d0;border-radius:3px"></div>
<svg class="a" style="left:1831px;top:176px;" width="16" height="14" viewBox="0 0 16 14" fill="none" stroke-linecap="round" stroke-linejoin="round"><path d="M2 10 L8 4 L14 10" stroke="#333" stroke-width="1.1"/></svg>
<div class="a" style="left:281px;top:553px;width:28px;height:21px;background:#d6e4e9;border-radius:4px"></div>
<svg class="a" style="left:287px;top:556px;" width="16" height="16" viewBox="0 0 16 16" fill="none" stroke-linecap="round" stroke-linejoin="round">
      <circle cx="2.5" cy="3" r="1.6" stroke="#5bbcf0" stroke-width="1.1"/>
      <circle cx="2.5" cy="7.8" r="1.6" stroke="#5bbcf0" stroke-width="1.1"/>
      <circle cx="2.5" cy="12.6" r="1.6" stroke="#5bbcf0" stroke-width="1.1"/>
      <path d="M6.5 3 H15 M6.5 7.8 H15 M6.5 12.6 H15" stroke="#333" stroke-width="1.3"/>
    </svg>
<svg class="a" style="left:315px;top:556px;" width="17" height="16" viewBox="0 0 17 16" fill="none" stroke-linecap="round" stroke-linejoin="round">
      <path d="M5.8 1.5 V14.5 M10.2 1.5 V14.5 M1.5 5.8 H15.5 M1.5 10.2 H15.5" stroke="#5bbcf0" stroke-width="1.1"/>
      <rect x="1" y="1" width="15" height="14" stroke="#333" stroke-width="1.4"/>
    </svg>
<svg class="a" style="left:343px;top:555px;" width="17" height="17" viewBox="0 0 17 17" fill="none" stroke-linecap="round" stroke-linejoin="round">
          <rect x="1" y="3" width="15" height="13" rx="1.5" stroke="#333" stroke-width="1.3"/>
          <path d="M4.5 1 V4 M12.5 1 V4 M1 6.5 H16" stroke="#333" stroke-width="1.3"/>
          <path d="M3.5 11.5 H13.5 M6.5 8.5 V14 M10.5 8.5 V14" stroke="#5bbcf0" stroke-width="1.1"/>
        </svg>
<svg class="a" style="left:375px;top:556px;" width="17" height="16" viewBox="0 0 17 16" fill="none" stroke-linecap="round" stroke-linejoin="round">
      <path d="M1 1.5 H16" stroke="#333" stroke-width="1.2"/>
      <path d="M3.5 5.5 H13.5" stroke="#5bbcf0" stroke-width="1.2"/>
      <path d="M5.5 9.5 H11.5" stroke="#333" stroke-width="1.2"/>
      <path d="M7.5 13.5 H9.5" stroke="#5bbcf0" stroke-width="1.2"/>
    </svg>
<svg class="a" style="left:407px;top:556px;" width="16" height="16" viewBox="0 0 16 16" fill="none" stroke-linecap="round" stroke-linejoin="round">
      <path d="M15.40 8.00 L15.26 9.44 L13.36 10.22 L12.82 11.22 L13.23 13.23 L12.11 14.15 L10.22 13.36 L9.13 13.69 L8.00 15.40 L6.56 15.26 L5.78 13.36 L4.78 12.82 L2.77 13.23 L1.85 12.11 L2.64 10.22 L2.31 9.13 L0.60 8.00 L0.74 6.56 L2.64 5.78 L3.18 4.78 L2.77 2.77 L3.89 1.85 L5.78 2.64 L6.87 2.31 L8.00 0.60 L9.44 0.74 L10.22 2.64 L11.22 3.18 L13.23 2.77 L14.15 3.89 L13.36 5.78 L13.69 6.87 Z" stroke="#333" stroke-width="1.2"/>
      <circle cx="8" cy="8" r="2.4" stroke="#5bbcf0" stroke-width="1.3"/>
    </svg>
<svg class="a" style="left:439px;top:556px;" width="16" height="16" viewBox="0 0 16 16" fill="none" stroke-linecap="round" stroke-linejoin="round">
      <path d="M1.5 1 L2.5 0.5 V4" stroke="#5bbcf0" stroke-width="0.9"/>
      <path d="M1.2 6.5 Q2.5 5.5 3 6.5 Q3 7.5 1.2 9 H3.2" stroke="#5bbcf0" stroke-width="0.9"/>
      <path d="M1.2 11.5 H3 L2 12.8 Q3.2 13 3 14.2 Q2.5 15.2 1.2 14.8" stroke="#5bbcf0" stroke-width="0.9"/>
      <path d="M6 2.5 H15 M6 8 H15 M6 13.5 H15" stroke="#333" stroke-width="1.3"/>
    </svg>
<svg class="a" style="left:467px;top:556px;" width="17" height="16" viewBox="0 0 17 16" fill="none" stroke-linecap="round" stroke-linejoin="round">
      <path d="M1 1.5 H16 M1 5.5 H16 M1 9.5 H9 M1 13.5 H6" stroke="#333" stroke-width="1.2"/>
      <path d="M12.5 9.5 V15.5 M9.5 12.5 H15.5" stroke="#5bbcf0" stroke-width="1.2"/>
    </svg>
<svg class="a" style="left:499px;top:556px;" width="17" height="16" viewBox="0 0 17 16" fill="none" stroke-linecap="round" stroke-linejoin="round">
      <path d="M6.5 3.5 H2 Q1 3.5 1 4.5 V14 Q1 15 2 15 H11.5 Q12.5 15 12.5 14 V9.5" stroke="#333" stroke-width="1.3"/>
      <path d="M7 9 L15.5 0.8 M10.5 0.8 H15.5 V5.5" stroke="#5bbcf0" stroke-width="1.2"/>
    </svg>
<svg class="a" style="left:531px;top:556px;" width="18" height="16" viewBox="0 0 18 16" fill="none" stroke-linecap="round" stroke-linejoin="round">
      <path d="M4 13 H1.5 V3 H13 M10.5 0.8 L13 3 L10.5 5.2" stroke="#333" stroke-width="1.2"/>
      <path d="M13 5.5 H16 V13 H5 M7.5 10.8 L5 13 L7.5 15.2" stroke="#5bbcf0" stroke-width="1.2"/>
    </svg>
<svg class="a" style="left:1450px;top:557px" width="13" height="13" viewBox="0 0 13 13"><rect x="0" y="0" width="13" height="13" rx="2" fill="#4766f7"/><path d="M3 6.6 L5.4 8.8 L10 3.6" stroke="#fff" stroke-width="1.9" fill="none" stroke-linecap="square"/></svg>
<div class="t" style="left:1465px;top:559px;color:#222;letter-spacing:-0.25px">Открыт (F6)</div>
<div class="a" style="left:1532px;top:553px;width:101px;height:22px;background:#fff;border:1px solid #cfcfcf;border-radius:4px;"></div>
<div class="a" style="left:1637px;top:553px;width:129px;height:22px;background:#fff;border:1px solid #cfcfcf;border-radius:4px;"></div>
<div class="a" style="left:1770px;top:553px;width:92px;height:22px;background:#fff;border:1px solid #cfcfcf;border-radius:4px;"></div>
<svg class="a" style="left:1547px;top:557px;" width="12" height="12" viewBox="0 0 12 12" fill="none" stroke-linecap="round" stroke-linejoin="round"><path d="M6 1 V11 M1 6 H11" stroke="#333" stroke-width="1.5" stroke-linecap="butt"/></svg>
<div class="t" style="left:1565px;top:558px;color:#222">Добавить</div>
<svg class="a" style="left:1650px;top:556px;" width="15" height="15" viewBox="0 0 15 15" fill="none" stroke-linecap="round" stroke-linejoin="round"><path d="M2.5 11.5 L3 9 L10 2 L12.5 4.5 L5.5 11.5 Z" stroke="#333" stroke-width="1.2"/><path d="M1.5 14 H11.5" stroke="#5bbcf0" stroke-width="1"/></svg>
<div class="t" style="left:1671px;top:558px;color:#222">Редактировать</div>
<svg class="a" style="left:1785px;top:557px;" width="12" height="12" viewBox="0 0 12 12" fill="none" stroke-linecap="round" stroke-linejoin="round"><path d="M1 6 H11" stroke="#333" stroke-width="1.6" stroke-linecap="butt"/></svg>
<div class="t" style="left:1803px;top:558px;color:#222">Удалить</div>
<div class="a" style="left:277px;top:600px;width:1587px;height:1px;background:#d2d2d2"></div>
<div class="a" style="left:282px;top:579px;width:104px;height:21px;border:1px solid #d2d2d2;border-bottom:none;border-radius:4px 4px 0 0;background:#d6e4e9"></div>
<div class="t" style="left:184.0px;width:300px;text-align:center;top:584px;color:#333">Спецификация</div>
<div class="a" style="left:389px;top:579px;width:119px;height:21px;border:1px solid #d2d2d2;border-bottom:none;border-radius:4px 4px 0 0;background:#f2f2f2"></div>
<div class="t" style="left:298.5px;width:300px;text-align:center;top:584px;color:#333">Печатные формы</div>
<div class="a" style="left:511px;top:579px;width:74px;height:21px;border:1px solid #d2d2d2;border-bottom:none;border-radius:4px 4px 0 0;background:#f2f2f2"></div>
<div class="t" style="left:398.0px;width:300px;text-align:center;top:584px;color:#333">Действия</div>
<div class="a" style="left:281px;top:605px;width:1581px;height:292px;background:#fff;border:1px solid #c8c8c8;border-radius:4px;overflow:hidden"><div class="a" style="left:0;top:0;width:1580px;height:49px;background:#f2f2f2"></div></div>
<div class="a" style="left:282px;top:655px;width:1579px;height:20px;background:#d6e5ea"></div>
<div class="a" style="left:1045px;top:655px;width:69px;height:20px;background:#c6e4e8"></div>
<div class="a" style="left:1114px;top:655px;width:38px;height:20px;background:#c6e4e8"></div>
<div class="a" style="left:1152px;top:655px;width:60px;height:20px;background:#c6e4e8"></div>
<div class="a" style="left:1212px;top:655px;width:61px;height:20px;background:#c6e4e8"></div>
<div class="a" style="left:1409px;top:655px;width:69px;height:20px;background:#c6e4e8"></div>
<div class="a" style="left:1478px;top:655px;width:69px;height:20px;background:#c6e4e8"></div>
<div class="a" style="left:1547px;top:655px;width:76px;height:20px;background:#c6e4e8"></div>
<div class="a" style="left:282px;top:654px;width:1579px;height:1px;background:#dcdcdc"></div>
<div class="a" style="left:282px;top:675px;width:1579px;height:1px;background:#e0e0e0"></div>
<div class="a" style="left:350px;top:606px;width:1px;height:48px;background:#dddddd"></div>
<div class="a" style="left:350px;top:655px;width:1px;height:20px;background:#e0e0e0"></div>
<div class="a" style="left:472px;top:606px;width:1px;height:48px;background:#dddddd"></div>
<div class="a" style="left:472px;top:655px;width:1px;height:20px;background:#e0e0e0"></div>
<div class="a" style="left:710px;top:606px;width:1px;height:48px;background:#dddddd"></div>
<div class="a" style="left:710px;top:655px;width:1px;height:20px;background:#e0e0e0"></div>
<div class="a" style="left:870px;top:606px;width:1px;height:48px;background:#dddddd"></div>
<div class="a" style="left:870px;top:655px;width:1px;height:20px;background:#e0e0e0"></div>
<div class="a" style="left:900px;top:606px;width:1px;height:48px;background:#dddddd"></div>
<div class="a" style="left:900px;top:655px;width:1px;height:20px;background:#e0e0e0"></div>
<div class="a" style="left:984px;top:606px;width:1px;height:48px;background:#dddddd"></div>
<div class="a" style="left:984px;top:655px;width:1px;height:20px;background:#e0e0e0"></div>
<div class="a" style="left:1045px;top:606px;width:1px;height:48px;background:#dddddd"></div>
<div class="a" style="left:1045px;top:655px;width:1px;height:20px;background:#e0e0e0"></div>
<div class="a" style="left:1114px;top:606px;width:1px;height:48px;background:#dddddd"></div>
<div class="a" style="left:1114px;top:655px;width:1px;height:20px;background:#e0e0e0"></div>
<div class="a" style="left:1152px;top:606px;width:1px;height:48px;background:#dddddd"></div>
<div class="a" style="left:1152px;top:655px;width:1px;height:20px;background:#e0e0e0"></div>
<div class="a" style="left:1212px;top:606px;width:1px;height:48px;background:#dddddd"></div>
<div class="a" style="left:1212px;top:655px;width:1px;height:20px;background:#e0e0e0"></div>
<div class="a" style="left:1273px;top:606px;width:1px;height:48px;background:#dddddd"></div>
<div class="a" style="left:1273px;top:655px;width:1px;height:20px;background:#e0e0e0"></div>
<div class="a" style="left:1333px;top:606px;width:1px;height:48px;background:#dddddd"></div>
<div class="a" style="left:1333px;top:655px;width:1px;height:20px;background:#e0e0e0"></div>
<div class="a" style="left:1409px;top:606px;width:1px;height:48px;background:#dddddd"></div>
<div class="a" style="left:1409px;top:655px;width:1px;height:20px;background:#e0e0e0"></div>
<div class="a" style="left:1478px;top:606px;width:1px;height:48px;background:#dddddd"></div>
<div class="a" style="left:1478px;top:655px;width:1px;height:20px;background:#e0e0e0"></div>
<div class="a" style="left:1547px;top:606px;width:1px;height:48px;background:#dddddd"></div>
<div class="a" style="left:1547px;top:655px;width:1px;height:20px;background:#e0e0e0"></div>
<div class="a" style="left:1623px;top:606px;width:1px;height:48px;background:#dddddd"></div>
<div class="a" style="left:1623px;top:655px;width:1px;height:20px;background:#e0e0e0"></div>
<div class="clip" style="left:292px;width:68px;text-align:center;top:616px;color:#222">Номер</div>
<div class="clip" style="left:292px;width:68px;text-align:center;top:632px;color:#222">строки</div>
<div class="clip" style="left:351px;width:121px;text-align:center;top:624px;color:#222">Штрихкод</div>
<div class="clip" style="left:473px;width:237px;text-align:center;top:624px;color:#222">Наименование</div>
<div class="clip" style="left:711px;width:159px;text-align:center;top:624px;color:#222">Партия</div>
<div class="clip" style="left:871px;width:29px;text-align:center;top:616px;color:#222">Ед.</div>
<div class="clip" style="left:871px;width:29px;text-align:center;top:632px;color:#222">изм.</div>
<div class="clip" style="left:901px;width:83px;text-align:center;top:624px;color:#222">Вид цен</div>
<div class="clip" style="left:985px;width:60px;text-align:center;top:608px;color:#222">Цена</div>
<div class="clip" style="left:985px;width:60px;text-align:center;top:624px;color:#222">поставщи</div>
<div class="clip" style="left:985px;width:60px;text-align:center;top:640px;color:#222">ка</div>
<div class="clip" style="left:1046px;width:68px;text-align:center;top:616px;color:#222">Надбавка,</div>
<div class="clip" style="left:1046px;width:68px;text-align:center;top:632px;color:#222">%</div>
<div class="clip" style="left:1115px;width:37px;text-align:center;top:608px;color:#222">НДС,</div>
<div class="clip" style="left:1115px;width:37px;text-align:center;top:624px;color:#222">номе</div>
<div class="clip" style="left:1115px;width:37px;text-align:center;top:640px;color:#222">р</div>
<div class="clip" style="left:1153px;width:59px;text-align:center;top:624px;color:#222">НДС, %</div>
<div class="clip" style="left:1213px;width:60px;text-align:center;top:608px;color:#222">Цена</div>
<div class="clip" style="left:1213px;width:60px;text-align:center;top:624px;color:#222">рознична</div>
<div class="clip" style="left:1213px;width:60px;text-align:center;top:640px;color:#222">я</div>
<div class="clip" style="left:1274px;width:59px;text-align:center;top:624px;color:#222">Кол-во</div>
<div class="clip" style="left:1334px;width:75px;text-align:center;top:616px;color:#222">Сумма</div>
<div class="clip" style="left:1334px;width:75px;text-align:center;top:632px;color:#222">поставщика</div>
<div class="clip" style="left:1410px;width:68px;text-align:center;top:616px;color:#222">Сумма</div>
<div class="clip" style="left:1410px;width:68px;text-align:center;top:632px;color:#222">надбавки</div>
<div class="clip" style="left:1479px;width:68px;text-align:center;top:616px;color:#222">Сумма НДС</div>
<div class="clip" style="left:1479px;width:68px;text-align:center;top:632px;color:#222">розничная</div>
<div class="clip" style="left:1548px;width:75px;text-align:center;top:616px;color:#222">Сумма</div>
<div class="clip" style="left:1548px;width:75px;text-align:center;top:632px;color:#222">розничная</div>
<div class="clip" style="left:1624px;width:237px;text-align:center;top:624px;color:#222">Строка накладной</div>
<svg class="a" style="left:284px;top:623px;" width="13" height="13" viewBox="0 0 13 13" fill="none" stroke-linecap="round" stroke-linejoin="round"><circle cx="6.5" cy="6.5" r="5.3" stroke="#5bbcf0" stroke-width="1.3"/><path d="M4 7.8 L6.5 5.3 L9 7.8" stroke="#333" stroke-width="1.2"/></svg>
<div class="clip" style="left:281px;top:659px;width:66px;text-align:right;color:#222">1</div>
<div class="clip" style="left:354px;top:659px;width:118px;color:#222">4810319013532</div>
<div class="clip" style="left:476px;top:659px;width:234px;color:#222">МОЛОКО ПАСТ.2.5% ОБОГ.КАЛЬЦ.П/П 0.9.</div>
<div class="clip" style="left:874px;top:659px;width:26px;color:#222">пор.</div>
<div class="clip" style="left:984px;top:659px;width:58px;text-align:right;color:#222">0,96</div>
<div class="clip" style="left:1045px;top:659px;width:66px;text-align:right;color:#222">18,37</div>
<div class="clip" style="left:1114px;top:659px;width:35px;text-align:right;color:#222">4</div>
<div class="clip" style="left:1152px;top:659px;width:57px;text-align:right;color:#222">10</div>
<div class="clip" style="left:1212px;top:659px;width:58px;text-align:right;color:#222">1,25</div>
<div class="clip" style="left:1273px;top:659px;width:57px;text-align:right;color:#222">1</div>
<div class="clip" style="left:1333px;top:659px;width:73px;text-align:right;color:#222">0,96</div>
<div class="clip" style="left:1409px;top:659px;width:66px;text-align:right;color:#222">0,18</div>
<div class="clip" style="left:1478px;top:659px;width:66px;text-align:right;color:#222">0,11</div>
<div class="clip" style="left:1547px;top:659px;width:73px;text-align:right;color:#222">1,25</div>
<div class="a" style="left:281px;top:899px;width:28px;height:21px;background:#d6e4e9;border-radius:4px"></div>
<svg class="a" style="left:287px;top:902px;" width="16" height="16" viewBox="0 0 16 16" fill="none" stroke-linecap="round" stroke-linejoin="round">
      <circle cx="2.5" cy="3" r="1.6" stroke="#5bbcf0" stroke-width="1.1"/>
      <circle cx="2.5" cy="7.8" r="1.6" stroke="#5bbcf0" stroke-width="1.1"/>
      <circle cx="2.5" cy="12.6" r="1.6" stroke="#5bbcf0" stroke-width="1.1"/>
      <path d="M6.5 3 H15 M6.5 7.8 H15 M6.5 12.6 H15" stroke="#333" stroke-width="1.3"/>
    </svg>
<svg class="a" style="left:315px;top:902px;" width="17" height="16" viewBox="0 0 17 16" fill="none" stroke-linecap="round" stroke-linejoin="round">
      <path d="M5.8 1.5 V14.5 M10.2 1.5 V14.5 M1.5 5.8 H15.5 M1.5 10.2 H15.5" stroke="#5bbcf0" stroke-width="1.1"/>
      <rect x="1" y="1" width="15" height="14" stroke="#333" stroke-width="1.4"/>
    </svg>
<svg class="a" style="left:347px;top:902px;" width="17" height="16" viewBox="0 0 17 16" fill="none" stroke-linecap="round" stroke-linejoin="round">
      <path d="M1 1.5 H16" stroke="#333" stroke-width="1.2"/>
      <path d="M3.5 5.5 H13.5" stroke="#5bbcf0" stroke-width="1.2"/>
      <path d="M5.5 9.5 H11.5" stroke="#333" stroke-width="1.2"/>
      <path d="M7.5 13.5 H9.5" stroke="#5bbcf0" stroke-width="1.2"/>
    </svg>
<svg class="a" style="left:379px;top:902px;" width="16" height="16" viewBox="0 0 16 16" fill="none" stroke-linecap="round" stroke-linejoin="round">
      <path d="M15.40 8.00 L15.26 9.44 L13.36 10.22 L12.82 11.22 L13.23 13.23 L12.11 14.15 L10.22 13.36 L9.13 13.69 L8.00 15.40 L6.56 15.26 L5.78 13.36 L4.78 12.82 L2.77 13.23 L1.85 12.11 L2.64 10.22 L2.31 9.13 L0.60 8.00 L0.74 6.56 L2.64 5.78 L3.18 4.78 L2.77 2.77 L3.89 1.85 L5.78 2.64 L6.87 2.31 L8.00 0.60 L9.44 0.74 L10.22 2.64 L11.22 3.18 L13.23 2.77 L14.15 3.89 L13.36 5.78 L13.69 6.87 Z" stroke="#333" stroke-width="1.2"/>
      <circle cx="8" cy="8" r="2.4" stroke="#5bbcf0" stroke-width="1.3"/>
    </svg>
<svg class="a" style="left:411px;top:902px;" width="16" height="16" viewBox="0 0 16 16" fill="none" stroke-linecap="round" stroke-linejoin="round">
      <path d="M1.5 1 L2.5 0.5 V4" stroke="#5bbcf0" stroke-width="0.9"/>
      <path d="M1.2 6.5 Q2.5 5.5 3 6.5 Q3 7.5 1.2 9 H3.2" stroke="#5bbcf0" stroke-width="0.9"/>
      <path d="M1.2 11.5 H3 L2 12.8 Q3.2 13 3 14.2 Q2.5 15.2 1.2 14.8" stroke="#5bbcf0" stroke-width="0.9"/>
      <path d="M6 2.5 H15 M6 8 H15 M6 13.5 H15" stroke="#333" stroke-width="1.3"/>
    </svg>
<svg class="a" style="left:439px;top:902px;" width="17" height="16" viewBox="0 0 17 16" fill="none" stroke-linecap="round" stroke-linejoin="round">
      <path d="M1 1.5 H16 M1 5.5 H16 M1 9.5 H9 M1 13.5 H6" stroke="#333" stroke-width="1.2"/>
      <path d="M12.5 9.5 V15.5 M9.5 12.5 H15.5" stroke="#5bbcf0" stroke-width="1.2"/>
    </svg>
<svg class="a" style="left:471px;top:902px;" width="17" height="16" viewBox="0 0 17 16" fill="none" stroke-linecap="round" stroke-linejoin="round">
      <path d="M6.5 3.5 H2 Q1 3.5 1 4.5 V14 Q1 15 2 15 H11.5 Q12.5 15 12.5 14 V9.5" stroke="#333" stroke-width="1.3"/>
      <path d="M7 9 L15.5 0.8 M10.5 0.8 H15.5 V5.5" stroke="#5bbcf0" stroke-width="1.2"/>
    </svg>
<svg class="a" style="left:503px;top:902px;" width="18" height="16" viewBox="0 0 18 16" fill="none" stroke-linecap="round" stroke-linejoin="round">
      <path d="M4 13 H1.5 V3 H13 M10.5 0.8 L13 3 L10.5 5.2" stroke="#333" stroke-width="1.2"/>
      <path d="M13 5.5 H16 V13 H5 M7.5 10.8 L5 13 L7.5 15.2" stroke="#5bbcf0" stroke-width="1.2"/>
    </svg>
<div class="a" style="left:279px;top:923px;width:1585px;height:1px;background:#d2d2d2"></div>
<div class="a" style="left:281px;top:933px;width:13px;height:13px;border:1.3px solid #707070;border-radius:2.5px;background:#fff"></div>
<div class="t" style="left:298px;top:933px;color:#222">Включить корректировку на форме</div>
<div class="a" style="left:1439px;top:928px;width:42px;height:22px;background:#fff;border:1px solid #cfcfcf;border-radius:4px;"></div>
<div class="a" style="left:1485px;top:928px;width:106px;height:22px;background:#fff;border:1px solid #cfcfcf;border-radius:4px;"></div>
<div class="a" style="left:1595px;top:928px;width:102px;height:22px;background:#fff;border:1px solid #cfcfcf;border-radius:4px;"></div>
<div class="a" style="left:1701px;top:928px;width:64px;height:22px;background:#fff;border:1px solid #cfcfcf;border-radius:4px;"></div>
<div class="a" style="left:1769px;top:928px;width:93px;height:22px;background:#fff;border:1px solid #cfcfcf;border-radius:4px;"></div>
<svg class="a" style="left:1452px;top:931px;" width="16" height="16" viewBox="0 0 16 16" fill="none" stroke-linecap="round" stroke-linejoin="round">
      <path d="M2.5 7 A5.5 5.5 0 0 1 12.5 4.5" stroke="#333" stroke-width="1.6"/>
      <path d="M13.5 1.5 V5.5 H9.5 Z" fill="#333" stroke="#333" stroke-width="0.8"/>
      <path d="M13.5 9 A5.5 5.5 0 0 1 3.5 11.5" stroke="#5bbcf0" stroke-width="1.6"/>
      <path d="M2.5 14.5 V10.5 H6.5 Z" fill="#5bbcf0" stroke="#5bbcf0" stroke-width="0.8"/>
    </svg>
<svg class="a" style="left:1499px;top:932px;" width="14" height="14" viewBox="0 0 14 14" fill="none" stroke-linecap="round" stroke-linejoin="round"><path d="M1.5 2.5 Q1.5 1.5 2.5 1.5 H9 L12.5 5 V11.5 Q12.5 12.5 11.5 12.5 H2.5 Q1.5 12.5 1.5 11.5 Z" stroke="#333" stroke-width="1.3"/><path d="M3.5 8.5 H10.5 V10.5 H3.5 Z" fill="#5bbcf0"/></svg>
<div class="t" style="left:1518px;top:933px;color:#8a8a8a">Сохранить</div>
<svg class="a" style="left:1609px;top:931px;" width="14" height="16" viewBox="0 0 14 16" fill="none" stroke-linecap="round" stroke-linejoin="round"><path d="M3 5 V13.5 Q3 14.5 4 14.5 H10 Q11 14.5 11 13.5 V5" stroke="#333" stroke-width="1.3"/><path d="M1 3.5 H13 M5 3.5 V1.5 H9 V3.5" stroke="#5bbcf0" stroke-width="1.2"/></svg>
<div class="t" style="left:1628px;top:933px;color:#8a8a8a">Отменить</div>
<svg class="a" style="left:1715px;top:932px;" width="14" height="14" viewBox="0 0 14 14" fill="none" stroke-linecap="round" stroke-linejoin="round"><path d="M1.5 7.5 L5 11.5 L12.5 2.5" stroke="#333" stroke-width="1.4"/></svg>
<div class="t" style="left:1733px;top:933px;color:#222">OK</div>
<svg class="a" style="left:1784px;top:932px;" width="12" height="13" viewBox="0 0 12 13" fill="none" stroke-linecap="round" stroke-linejoin="round"><path d="M1.5 1.5 L10.5 11.5 M10.5 1.5 L1.5 11.5" stroke="#333" stroke-width="1.3"/></svg>
<div class="t" style="left:1802px;top:933px;color:#222">Закрыть</div>
<div class="a" style="left:624px;top:0px;width:130px;height:57px;border:3px solid #ff0000;border-radius:3px"></div>
<div class="a" style="left:6px;top:737px;width:182px;height:31px;border:3px solid #ff0000;border-radius:2px"></div>
<svg class="a" style="left:0;top:0" width="1870" height="953">
      <path d="M627 57 L199 724" stroke="#ff0000" stroke-width="3" fill="none"/>
      <path d="M190.6 736.8 L194.8 721 L204 725.2 Z" fill="#ff0000"/>
    </svg>
</div></body></html>
